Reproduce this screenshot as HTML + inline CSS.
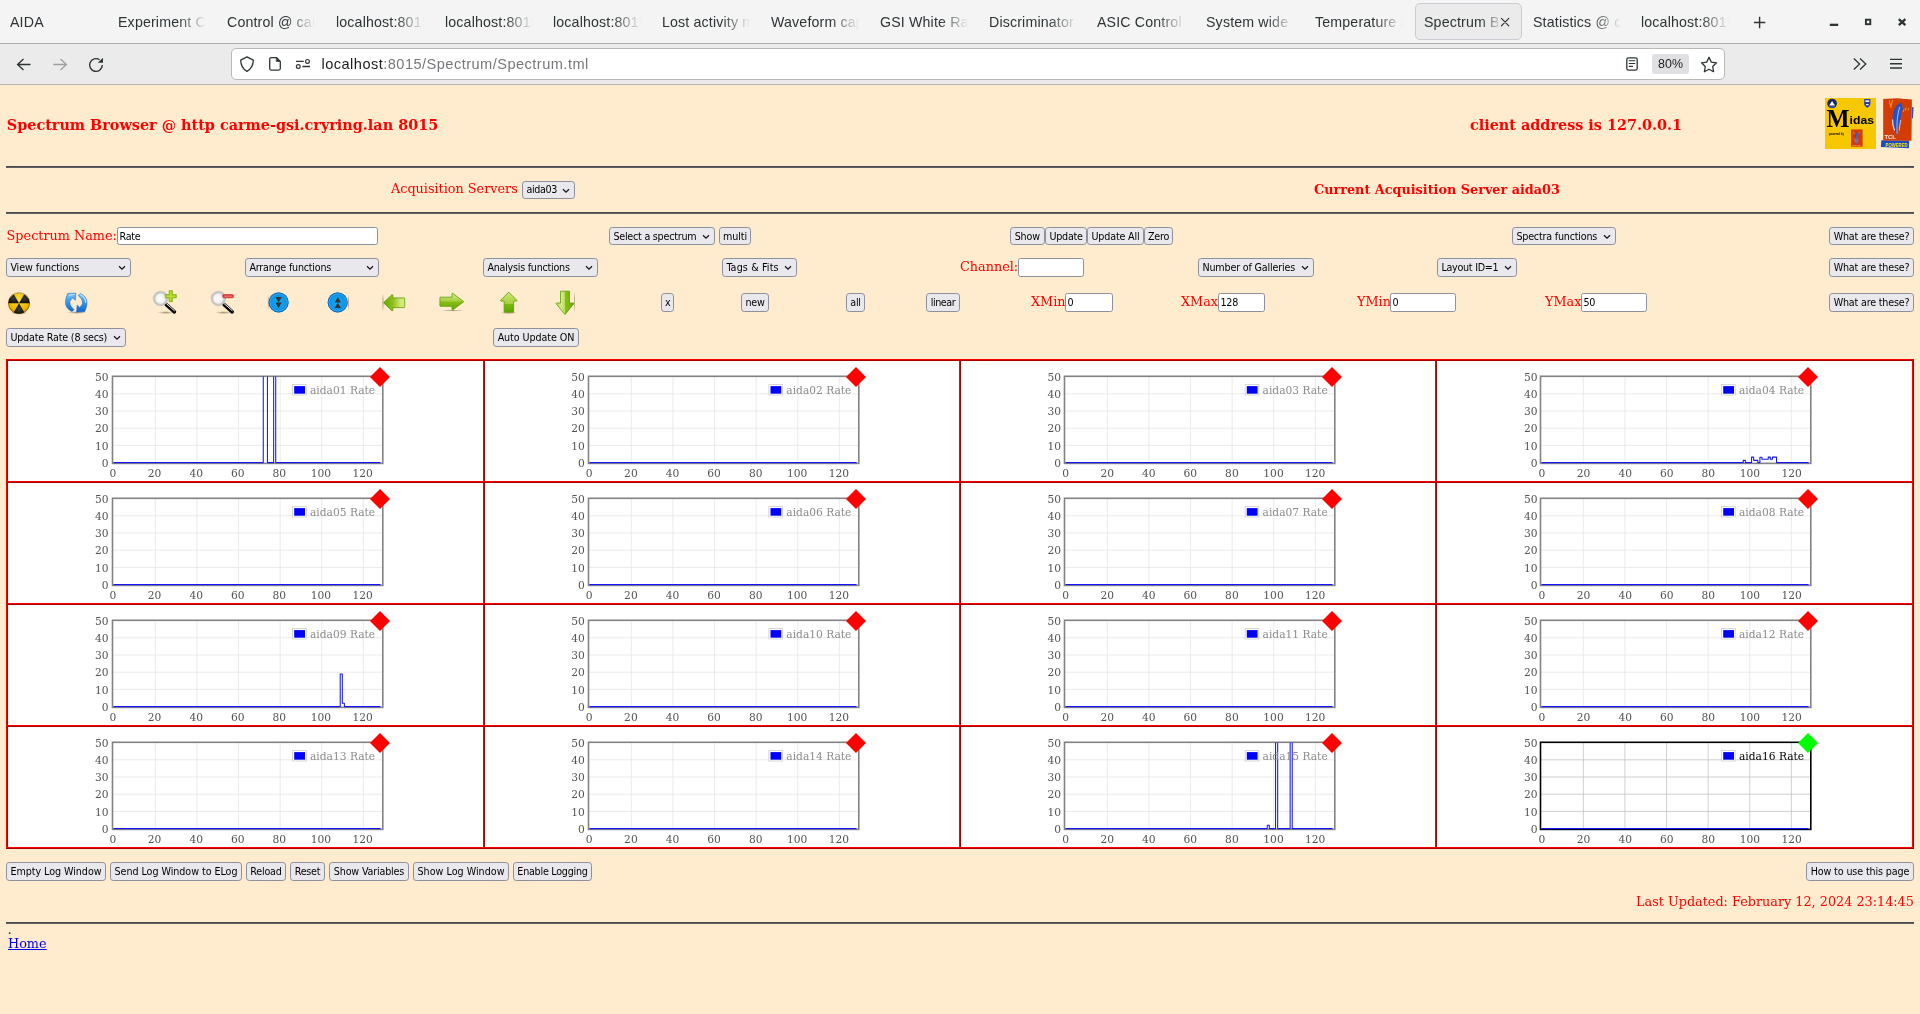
<!DOCTYPE html>
<html lang="en"><head><meta charset="utf-8"><title>Spectrum Browser</title>
<style>
html,body{margin:0;padding:0}
body{width:1920px;height:1014px;overflow:hidden;position:relative;background:#ffebcd;font-family:"DejaVu Serif","Liberation Serif",serif;font-size:12.8px;color:#f00}
.abs,.abs *{box-sizing:border-box}
.abs{position:absolute;white-space:nowrap}
/* chrome */
#tabbar{left:0;top:0;width:1920px;height:43px;background:#f4f4f4}
#tabline{left:0;top:43px;width:1920px;height:1px;background:#adadad}
#toolbar{left:0;top:44px;width:1920px;height:40px;background:#ebebeb}
#toolline{left:0;top:84px;width:1920px;height:1px;background:#b6b6b3}
.tab{top:12px;height:20px;width:89px;overflow:hidden;font:14.2px/20px "Liberation Sans","DejaVu Sans",sans-serif;color:#2e3436;letter-spacing:0.16px;
 -webkit-mask-image:linear-gradient(to right,#000 0,#000 60px,transparent 88px);mask-image:linear-gradient(to right,#000 0,#000 60px,transparent 88px)}
#acttab{left:1415px;top:3px;width:107px;height:37px;background:#ebebeb;border:1px solid #cbcbd3;border-radius:5px}
#urlbox{left:231px;top:48px;width:1494px;height:32px;background:#fff;border:1px solid #b9b9b6;border-radius:5px}
#url{left:321.5px;top:54px;font:14.6px/20px "Liberation Sans","DejaVu Sans",sans-serif;color:#77777b;letter-spacing:0.46px}
#url b{font-weight:normal;color:#1c1c1e}
#zoomb{left:1652px;top:54px;width:37px;height:20px;border-radius:3px;background:#e0e0e2;font:12.4px/20px "Liberation Sans","DejaVu Sans",sans-serif;color:#1c1c1e;text-align:center}
/* page */
.ui{font-family:"DejaVu Sans Condensed","DejaVu Sans","Liberation Sans",sans-serif;font-size:10.67px;color:#000}
.btn{height:19px;line-height:17px;background:#e9e9ed;border:1px solid #8f8f9d;border-radius:3.2px;padding:0 3px;text-align:center}
.sel{height:19px;line-height:17px;background:#e9e9ed;border:1px solid #8f8f9d;border-radius:3.2px;padding:0 0 0 3.4px}
.inp{height:18px;line-height:17.4px;background:#fff;border:1px solid #8f8f9d;border-radius:2.4px;padding:0 1.6px}
.hr{left:6px;width:1908px;height:2px;background:linear-gradient(#494b50,#494b50 50%,#5f6063 50%)}
.t{line-height:15px}
.tick{font-size:10.67px;line-height:13px;color:#545454}
</style></head><body>
<div id="root" style="position:absolute;left:0;top:0;width:1920px;height:1014px;will-change:transform">

<div class="abs" id="tabbar"></div><div class="abs" id="tabline"></div><div class="abs" id="toolbar"></div><div class="abs" id="toolline"></div>
<div class="abs" id="acttab"></div>
<div class="abs" id="urlbox"></div>
<div class="abs tab" style="left:10px">AIDA</div>
<div class="abs tab" style="left:118px">Experiment Control</div>
<div class="abs tab" style="left:227px">Control @ carme</div>
<div class="abs tab" style="left:336px">localhost:8015</div>
<div class="abs tab" style="left:445px">localhost:8015</div>
<div class="abs tab" style="left:553px">localhost:8015</div>
<div class="abs tab" style="left:662px">Lost activity monitor</div>
<div class="abs tab" style="left:771px">Waveform capture</div>
<div class="abs tab" style="left:880px">GSI White Rabbit</div>
<div class="abs tab" style="left:989px">Discriminator</div>
<div class="abs tab" style="left:1097px">ASIC Control</div>
<div class="abs tab" style="left:1206px">System wide checks</div>
<div class="abs tab" style="left:1315px">Temperature and status</div>
<div class="abs tab" style="left:1424px;width:74px;-webkit-mask-image:linear-gradient(to right,#000 0,#000 57px,transparent 79px);mask-image:linear-gradient(to right,#000 0,#000 57px,transparent 79px)">Spectrum Browser</div>
<div class="abs tab" style="left:1533px">Statistics @ carme</div>
<div class="abs tab" style="left:1641px">localhost:8015</div>
<svg class="abs" style="left:0;top:0" width="1920" height="85" viewBox="0 0 1920 85" fill="none" stroke="#2e3436" stroke-width="1.5" stroke-linecap="round" stroke-linejoin="round">
<path d="M1501.400 18.400l7.400 7.400M1508.800 18.400l-7.400 7.400" stroke-width="1.200"/>
<path d="M1753.900 22.500h11.400M1759.600 16.800v11.400" stroke-width="1.400" stroke-linecap="butt"/>
<path d="M1829.800 24.850h8.400" stroke-width="2.300" stroke-linecap="butt"/>
<rect x="1865.900" y="19.700" width="4.400" height="4.500" stroke-width="1.900" stroke-linejoin="miter"/>
<path d="M1898.800 19.200l6.600 6M1905.400 19.200l-6.600 6" stroke-width="2.300" stroke-linecap="butt"/>
<path d="M30.500 64.500H18M23.500 59.100L17.600 64.500l5.900 5.500" stroke-width="1.400" stroke-linecap="butt" stroke-linejoin="miter"/>
<path d="M53.200 64.500h13M60.500 59.100l5.900 5.400-5.900 5.500" stroke="#9d9fa0" stroke-width="1.300" stroke-linecap="butt" stroke-linejoin="miter"/>
<path d="M102.300 65A6.350 6.350 0 1 1 99.600 59.800" stroke-width="1.400" stroke-linecap="butt"/><path d="M103 57.800v4.900h-5.200z" fill="#2e3436" stroke="none"/>
<path d="M247 56.800l-6.300 3.300c0 5.500 1.500 8.600 6.300 11.300 4.800-2.700 6.300-5.800 6.300-11.300z" stroke-width="1.300"/>
<path d="M271.200 57.700h5.400l3.700 3.700v7.200a1.500 1.500 0 0 1-1.500 1.500h-7.600a1.500 1.500 0 0 1-1.500-1.500v-9.400a1.500 1.500 0 0 1 1.500-1.500z" stroke-width="1.300"/><path d="M276.600 57.700l3.700 3.700h-3.700z" fill="#2e3436" stroke-width="0.800"/>
<path d="M296 61.400h7.700M302.400 66.500h7.600" stroke-width="1.300" stroke-linecap="butt"/><circle cx="307.500" cy="61.400" r="1.900" stroke-width="1.200"/><circle cx="298.300" cy="66.500" r="1.900" stroke-width="1.200"/>
<rect x="1626.800" y="57.800" width="10.400" height="12.300" rx="1.700" stroke-width="1.300"/><path d="M1629.200 60.700h5.700M1629.200 63.500h5.700M1629.200 66.400h3.300" stroke-width="1.100"/>
<path d="M1709 57.300l2.300 4.800 5.200.7-3.800 3.700.9 5.200-4.600-2.500-4.600 2.500.9-5.200-3.800-3.700 5.200-.7z" stroke-width="1.300"/>
<path d="M1853.800 58.600l5.800 5.400-5.800 5.400M1860 58.600l5.800 5.400-5.800 5.400" stroke-width="1.300" stroke-linecap="butt" stroke-linejoin="miter"/>
<path d="M1890 59.400h12M1890 63.750h12M1890 68h12" stroke-width="1.300" stroke-linecap="butt"/>
</svg>
<div class="abs" id="url"><b>localhost</b>:8015/Spectrum/Spectrum.tml</div>
<div class="abs" id="zoomb">80%</div>
<div class="abs" style="left:6.8px;top:116.2px;font-weight:bold;font-size:14.4px;line-height:18px">Spectrum Browser @ http carme-gsi.cryring.lan 8015</div>
<div class="abs" style="left:1470px;top:116.2px;font-weight:bold;font-size:14.4px;line-height:18px">client address is 127.0.0.1</div>
<div class="abs hr" style="top:166px"></div>
<div class="abs t" style="left:391px;top:181px">Acquisition Servers</div>
<div class="abs t" style="left:1314px;top:182px;font-weight:bold">Current Acquisition Server aida03</div>
<div class="abs hr" style="top:212px"></div>
<div class="abs ui sel" style="line-height:15px;left:522px;top:181px;width:53px;height:18px"><span style="letter-spacing:-0.334px">aida03</span><svg style="position:absolute;right:4px;top:5.5px" width="8" height="6" viewBox="0 0 8 6"><path d="M1 1.200l3 3 3-3" fill="none" stroke="#15141a" stroke-width="1.250"/></svg></div>
<div class="abs t" style="left:6.6px;top:228px">Spectrum Name:</div>
<div class="abs ui inp" style="left:117px;top:227px;width:261px;height:18px"><span style="letter-spacing:-0.317px">Rate</span></div>
<div class="abs ui sel" style="line-height:17px;left:609px;top:227px;width:106px;height:18px"><span style="letter-spacing:-0.231px">Select a spectrum</span><svg style="position:absolute;right:4px;top:5.5px" width="8" height="6" viewBox="0 0 8 6"><path d="M1 1.200l3 3 3-3" fill="none" stroke="#15141a" stroke-width="1.250"/></svg></div>
<div class="abs ui btn" style="left:719px;top:227px;width:32px;height:18px"><span style="letter-spacing:-0.103px">multi</span></div>
<div class="abs ui btn" style="left:1010px;top:227px;width:34.6px;height:18px"><span style="letter-spacing:-0.144px">Show</span></div>
<div class="abs ui btn" style="left:1045.4px;top:227px;width:41.4px;height:18px"><span style="letter-spacing:-0.239px">Update</span></div>
<div class="abs ui btn" style="left:1087px;top:227px;width:57px;height:18px"><span style="letter-spacing:-0.166px">Update All</span></div>
<div class="abs ui btn" style="left:1144px;top:227px;width:29px;height:18px"><span style="letter-spacing:-0.262px">Zero</span></div>
<div class="abs ui sel" style="line-height:17px;left:1512px;top:227px;width:104px;height:18px"><span style="letter-spacing:-0.201px">Spectra functions</span><svg style="position:absolute;right:4px;top:5.5px" width="8" height="6" viewBox="0 0 8 6"><path d="M1 1.200l3 3 3-3" fill="none" stroke="#15141a" stroke-width="1.250"/></svg></div>
<div class="abs ui btn" style="left:1829px;top:227px;width:85px;height:18px"><span style="letter-spacing:-0.186px">What are these?</span></div>
<div class="abs ui sel" style="line-height:17px;left:6px;top:258px;width:125px;height:19px"><span style="letter-spacing:-0.088px">View functions</span><svg style="position:absolute;right:4px;top:6px" width="8" height="6" viewBox="0 0 8 6"><path d="M1 1.200l3 3 3-3" fill="none" stroke="#15141a" stroke-width="1.250"/></svg></div>
<div class="abs ui sel" style="line-height:17px;left:245px;top:258px;width:134px;height:19px"><span style="letter-spacing:-0.217px">Arrange functions</span><svg style="position:absolute;right:4px;top:6px" width="8" height="6" viewBox="0 0 8 6"><path d="M1 1.200l3 3 3-3" fill="none" stroke="#15141a" stroke-width="1.250"/></svg></div>
<div class="abs ui sel" style="line-height:17px;left:483px;top:258px;width:115px;height:19px"><span style="letter-spacing:-0.245px">Analysis functions</span><svg style="position:absolute;right:4px;top:6px" width="8" height="6" viewBox="0 0 8 6"><path d="M1 1.200l3 3 3-3" fill="none" stroke="#15141a" stroke-width="1.250"/></svg></div>
<div class="abs ui sel" style="line-height:17px;left:722px;top:258px;width:75px;height:19px"><span style="letter-spacing:0.139px">Tags &amp; Fits</span><svg style="position:absolute;right:4px;top:6px" width="8" height="6" viewBox="0 0 8 6"><path d="M1 1.200l3 3 3-3" fill="none" stroke="#15141a" stroke-width="1.250"/></svg></div>
<div class="abs t" style="left:960px;top:259px">Channel:</div>
<div class="abs ui inp" style="left:1018px;top:258px;width:66px;height:19px"></div>
<div class="abs ui sel" style="line-height:17px;left:1198px;top:258px;width:116px;height:19px"><span style="letter-spacing:-0.167px">Number of Galleries</span><svg style="position:absolute;right:4px;top:6px" width="8" height="6" viewBox="0 0 8 6"><path d="M1 1.200l3 3 3-3" fill="none" stroke="#15141a" stroke-width="1.250"/></svg></div>
<div class="abs ui sel" style="line-height:17px;left:1437px;top:258px;width:80px;height:19px"><span style="letter-spacing:-0.270px">Layout ID=1</span><svg style="position:absolute;right:4px;top:6px" width="8" height="6" viewBox="0 0 8 6"><path d="M1 1.200l3 3 3-3" fill="none" stroke="#15141a" stroke-width="1.250"/></svg></div>
<div class="abs ui btn" style="left:1829px;top:258px;width:85px;height:19px"><span style="letter-spacing:-0.186px">What are these?</span></div>
<div class="abs ui btn" style="left:661px;top:293px;width:13px;height:19px"><span style="letter-spacing:-0.372px">x</span></div>
<div class="abs ui btn" style="left:741px;top:293px;width:28px;height:19px"><span style="letter-spacing:-0.276px">new</span></div>
<div class="abs ui btn" style="left:846px;top:293px;width:19px;height:19px"><span style="letter-spacing:-0.301px">all</span></div>
<div class="abs ui btn" style="left:926px;top:293px;width:34px;height:19px"><span style="letter-spacing:-0.404px">linear</span></div>
<div class="abs t" style="left:1031px;top:294px">XMin</div>
<div class="abs ui inp" style="left:1065px;top:293px;width:48px;height:19px">0</div>
<div class="abs t" style="left:1181px;top:294px">XMax</div>
<div class="abs ui inp" style="left:1218px;top:293px;width:47px;height:19px"><span style="letter-spacing:-0.332px">128</span></div>
<div class="abs t" style="left:1357px;top:294px">YMin</div>
<div class="abs ui inp" style="left:1390px;top:293px;width:66px;height:19px">0</div>
<div class="abs t" style="left:1545px;top:294px">YMax</div>
<div class="abs ui inp" style="left:1581px;top:293px;width:66px;height:19px"><span style="letter-spacing:-0.452px">50</span></div>
<div class="abs ui btn" style="left:1829px;top:293px;width:85px;height:19px"><span style="letter-spacing:-0.186px">What are these?</span></div>
<div class="abs ui sel" style="line-height:17px;left:6px;top:328px;width:120px;height:19px"><span style="letter-spacing:-0.193px">Update Rate (8 secs)</span><svg style="position:absolute;right:4px;top:6px" width="8" height="6" viewBox="0 0 8 6"><path d="M1 1.200l3 3 3-3" fill="none" stroke="#15141a" stroke-width="1.250"/></svg></div>
<div class="abs ui btn" style="left:493px;top:328px;width:86px;height:19px"><span style="letter-spacing:-0.078px">Auto Update ON</span></div>
<svg class="abs" style="left:0;top:285px" width="600" height="35" viewBox="0 285 600 35">
<defs>
<radialGradient id="gy" cx="0.5" cy="0.35" r="0.75"><stop offset="0" stop-color="#ffe23a"/><stop offset="0.6" stop-color="#f2b800"/><stop offset="1" stop-color="#c98a00"/></radialGradient>
<radialGradient id="gk" cx="0.5" cy="0.5" r="0.6"><stop offset="0" stop-color="#3a3a3a"/><stop offset="1" stop-color="#0c0c0c"/></radialGradient>
<linearGradient id="gb1" x1="0" y1="0" x2="0" y2="1"><stop offset="0" stop-color="#9ad0f5"/><stop offset="0.45" stop-color="#3c9ae6"/><stop offset="1" stop-color="#0f66c8"/></linearGradient>
<linearGradient id="gb2" gradientUnits="userSpaceOnUse" x1="0" y1="292" x2="0" y2="313"><stop offset="0" stop-color="#8ecbf6"/><stop offset="0.45" stop-color="#3d9be8"/><stop offset="1" stop-color="#0b62c6"/></linearGradient>
<radialGradient id="gbl" cx="0.5" cy="0.5" r="0.5"><stop offset="0" stop-color="#16acf5"/><stop offset="0.7" stop-color="#0e96e6"/><stop offset="1" stop-color="#0a84da"/></radialGradient>
<radialGradient id="gl" cx="0.45" cy="0.5" r="0.55"><stop offset="0" stop-color="#ffffff"/><stop offset="0.7" stop-color="#efefef"/><stop offset="1" stop-color="#d8d8d8"/></radialGradient>
<linearGradient id="gga" x1="0" y1="0" x2="1" y2="0"><stop offset="0" stop-color="#62a608"/><stop offset="0.45" stop-color="#8fc01c"/><stop offset="0.8" stop-color="#d2e674"/><stop offset="1" stop-color="#dcec88"/></linearGradient>
<linearGradient id="ggb" x1="0" y1="0" x2="0" y2="1"><stop offset="0" stop-color="#d6ec92"/><stop offset="0.45" stop-color="#a8d040"/><stop offset="0.55" stop-color="#84bc12"/><stop offset="1" stop-color="#6aa80a"/></linearGradient>
<linearGradient id="ggc" x1="0" y1="0" x2="0" y2="1"><stop offset="0" stop-color="#cfe67a"/><stop offset="0.58" stop-color="#a6cf3c"/><stop offset="0.6" stop-color="#7ab80e"/><stop offset="1" stop-color="#5fa406"/></linearGradient>
<linearGradient id="ggd" x1="0" y1="0" x2="1" y2="0"><stop offset="0" stop-color="#b4d850"/><stop offset="0.3" stop-color="#d4ea90"/><stop offset="0.49" stop-color="#b8da58"/><stop offset="0.51" stop-color="#86be14"/><stop offset="1" stop-color="#6eac0a"/></linearGradient>
<radialGradient id="gsh" cx="0.5" cy="0.5" r="0.5"><stop offset="0" stop-color="#5a4a30" stop-opacity="0.55"/><stop offset="1" stop-color="#5a4a30" stop-opacity="0"/></radialGradient>
<clipPath id="cb"><circle cx="19" cy="303.200" r="10.600"/></clipPath>
<linearGradient id="gst" x1="0" y1="0" x2="0" y2="1"><stop offset="0" stop-color="#6a5a48" stop-opacity="0"/><stop offset="0.3" stop-color="#6a5a48" stop-opacity="0.45"/><stop offset="0.7" stop-color="#6a5a48" stop-opacity="0.45"/><stop offset="1" stop-color="#6a5a48" stop-opacity="0"/></linearGradient>
</defs>
<!-- radiation -->
<ellipse cx="19" cy="313" rx="9" ry="1.800" fill="url(#gsh)"/>
<circle cx="19" cy="303.200" r="10.800" fill="url(#gy)"/>
<g clip-path="url(#cb)" fill="url(#gk)">
<path d="M19 303.200L8 303.200A11 11 0 0 1 13.500 293.670z"/>
<path d="M19 303.200L24.500 293.670A11 11 0 0 1 30 303.200z"/>
<path d="M19 303.200L24.500 312.730A11 11 0 0 1 13.500 312.730z"/>
</g>
<circle cx="19" cy="303.200" r="10.500" fill="none" stroke="#1a1408" stroke-opacity="0.550" stroke-width="0.800"/>
<path d="M10.500 297.500A10 10 0 0 1 27.500 297.500" fill="none" stroke="#fff" stroke-opacity="0.350" stroke-width="1"/>
<!-- refresh -->
<ellipse cx="76.500" cy="312.500" rx="9.500" ry="1.500" fill="url(#gsh)"/>
<path id="rfa" d="M80.300 293.600C84.200 295.200 86.800 298.600 86.900 302.700C87 305.600 86 308.600 84.600 311.800L76.600 312.100L77.100 305.050L79.600 307.300C81.600 305.800 82.600 304.300 82.550 302.700C82.500 300 80.800 297.600 78.300 295.600z" fill="url(#gb2)" stroke="#1c6ed0" stroke-width="0.600" stroke-linejoin="round"/>
<path d="M72.10 311.60C68.20 310.00 65.60 306.60 65.50 302.50C65.40 299.60 66.40 296.60 67.80 293.40L75.80 293.10L75.30 300.15L72.80 297.90C70.80 299.40 69.80 300.90 69.85 302.50C69.90 305.20 71.60 307.60 74.10 309.60z" fill="url(#gb2)" stroke="#1c6ed0" stroke-width="0.600" stroke-linejoin="round"/>
<path d="M80.600 294.800C83.600 296.400 85.500 299.200 85.700 302.400" fill="none" stroke="#e4f3fd" stroke-opacity="0.800" stroke-width="1.200" stroke-linecap="round"/>
<path d="M69.300 295.400L74.300 294.300" fill="none" stroke="#d6ecfc" stroke-opacity="0.700" stroke-width="1.100" stroke-linecap="round"/>
<!-- zoom in -->
<g id="mag">
<ellipse cx="165.800" cy="312.600" rx="8.500" ry="1.500" fill="url(#gsh)"/>
<path d="M166.300 304.600L174.400 311.800" stroke="#0a0a0a" stroke-width="3.600" stroke-linecap="round"/>
<path d="M166.600 303.800L174.400 310.700" stroke="#f4f4f4" stroke-width="1" stroke-linecap="round"/>
<circle cx="160.600" cy="298.500" r="6.300" fill="url(#gl)" stroke="#c6c6c6" stroke-width="2.100"/>
<circle cx="160.600" cy="298.500" r="7.400" fill="none" stroke="#a8a8a8" stroke-opacity="0.600" stroke-width="0.500"/>
</g>
<path d="M169.150 290.700h3.300v3.850h3.850v3.300h-3.850v3.850h-3.300v-3.850h-3.850v-3.300h3.850z" fill="#9ccb1c" stroke="#74ac0a" stroke-width="0.700" stroke-linejoin="round"/>
<path d="M170.800 291.600v9.200M166.200 296.200h9.200" stroke="#d8e640" stroke-width="1" stroke-opacity="0.900"/>
<!-- zoom out -->
<use href="#mag" x="57.800"/>
<rect x="222.600" y="294.600" width="10.900" height="3.200" rx="1.200" fill="#e23a3a" stroke="#c81e1e" stroke-width="0.600"/>
<path d="M223.600 296.200h9" stroke="#f08a8a" stroke-width="0.900"/>
<rect x="267.900" y="294.500" width="0.900" height="15.500" fill="url(#gst)"/>
<rect x="348" y="294.500" width="0.900" height="15.500" fill="url(#gst)"/>
<rect x="382.400" y="293.500" width="1.100" height="18" fill="url(#gst)"/>
<rect x="574" y="291.500" width="0.900" height="21" fill="url(#gst)"/>
<!-- blue down -->
<circle cx="278.600" cy="302.400" r="10" fill="url(#gbl)"/>
<circle cx="278.600" cy="302.400" r="9.550" fill="none" stroke="#0a64ba" stroke-width="0.900"/><circle cx="278.600" cy="302.400" r="8.600" fill="none" stroke="#8ad6ff" stroke-opacity="0.550" stroke-width="0.700"/>
<path d="M275.500 297h6.200l-3.100 5.400zM275.500 302.500h6.200l-3.100 5.500z" fill="#35332f"/>
<!-- blue up -->
<circle cx="337.700" cy="302.400" r="10" fill="url(#gbl)"/>
<circle cx="337.700" cy="302.400" r="9.550" fill="none" stroke="#0a64ba" stroke-width="0.900"/><circle cx="337.700" cy="302.400" r="8.600" fill="none" stroke="#8ad6ff" stroke-opacity="0.550" stroke-width="0.700"/>
<path d="M334.700 302.400h6.200l-3.100 -5.400zM334.700 307.900h6.200l-3.100 -5.500z" fill="#35332f"/>
<!-- green left -->
<path d="M383.500 302.700L391.900 294.700L392.900 295V297.900H404.200Q404.700 297.900 404.700 298.400V307.100Q404.700 307.600 404.200 307.600H392.900V310.500L391.900 310.800z" fill="url(#gga)" stroke="#5c9e08" stroke-width="0.800" stroke-linejoin="round"/>
<!-- green right -->
<ellipse cx="452.500" cy="310.600" rx="11.500" ry="1" fill="url(#gsh)"/>
<path d="M440.300 297.200H452V293.600L452.800 293.300L463.700 301.700L452.800 309.900L452 309.600V306.300H440.300Q439.900 306.300 439.900 305.900V297.600Q439.900 297.200 440.300 297.200z" fill="url(#ggb)" stroke="#5c9e08" stroke-width="0.800" stroke-linejoin="round"/>
<!-- green up -->
<ellipse cx="508.750" cy="312.700" rx="8.500" ry="1.400" fill="url(#gsh)"/>
<path d="M508.750 292.100L517 300.400L516.700 301.100H513.600V312.200H504.100V301.100H500.800L500.500 300.400z" fill="url(#ggc)" stroke="#5c9e08" stroke-width="0.800" stroke-linejoin="round"/>
<!-- green down -->
<path d="M560.500 291.200H569.500V303H573.600L573.900 303.700L565 314.600L556.100 303.700L556.400 303H560.500z" fill="url(#ggd)" stroke="#5c9e08" stroke-width="0.800" stroke-linejoin="round"/>
</svg>
<svg class="abs" style="left:1820px;top:95px" width="100" height="58" viewBox="1820 95 100 58">
<defs>
<g id="feather">
<path d="M1901.200 102.600C1896.200 104.800 1892.900 110.500 1892.600 117.500C1892.300 124 1893.800 130.500 1897 135.600C1897.600 130.500 1898.600 126.500 1899.800 122C1900.800 118.200 1901.400 115 1901.300 111.600L1902.800 110.200C1902.800 107.400 1902.200 104.600 1901.200 102.600z" fill="#2353c4"/>
<path d="M1899.800 107C1897.600 113 1896.600 122 1897.100 134" fill="none" stroke="#e8eefc" stroke-width="0.700"/>
<path d="M1892.600 119.500C1892.400 123 1893 127 1894.600 130.500" fill="none" stroke="#f0e8e0" stroke-width="1.100"/>
<path d="M1900.800 120C1900 123.500 1899.400 127 1899.300 130.500" fill="none" stroke="#f0e0d8" stroke-width="0.800"/>
</g>
</defs>
<!-- Midas -->
<rect x="1825" y="98" width="51" height="51" fill="#f7c800"/>
<circle cx="1832.100" cy="103.500" r="4.800" fill="#16246e"/>
<path d="M1829.200 105.600L1832.100 100.900L1835 105.600z" fill="#fff"/>
<path d="M1828.400 106.300A4.800 4.800 0 0 0 1835.800 106.300z" fill="#3c5cc0"/>
<path d="M1864.200 99h6.200v4.600c0 2.200-1.400 3.400-3.100 4.100c-1.700-.7-3.100-1.900-3.100-4.100z" fill="#2a3caa"/>
<path d="M1865.400 100.300h3.800v1.600h-3.800zM1866 104h2.600v1.300h-2.600z" fill="#e8ecff"/>
<text x="1826.600" y="126.800" font-family="'Liberation Serif','DejaVu Serif',serif" font-weight="bold" font-size="26" fill="#000" textLength="23" lengthAdjust="spacingAndGlyphs">M</text>
<text x="1849.600" y="123.700" font-family="'Liberation Sans','DejaVu Sans',sans-serif" font-weight="bold" font-size="11.400" fill="#000" textLength="24.600" lengthAdjust="spacingAndGlyphs">idas</text>
<text x="1828.900" y="135.200" font-family="'Liberation Sans','DejaVu Sans',sans-serif" font-weight="bold" font-size="3.600" fill="#000" textLength="15" lengthAdjust="spacingAndGlyphs">powered by</text>
<rect x="1851" y="129.400" width="11.600" height="17.300" fill="#d63a08"/>
<use href="#feather" transform="translate(1856.800 138) scale(0.37) translate(-1897.500 -119)"/>
<path d="M1853.400 131.500l1 2.600M1859.600 131.800l-.8 2" stroke="#f7c800" stroke-width="0.500"/>
<text x="1852.200" y="145.600" font-family="'Liberation Sans','DejaVu Sans',sans-serif" font-weight="bold" font-size="2.200" fill="#f0b0a0" textLength="9" lengthAdjust="spacingAndGlyphs">TCL/TK</text>
<!-- Tcl powered -->
<path d="M1912 107.300L1913.600 107L1913 118L1911.800 119z" fill="#2353c4"/>
<path d="M1881.300 140.200L1909.200 140.400L1908.900 148.200L1880.900 146.900z" fill="#1c4cc0"/>
<path d="M1883.200 99L1897 98.300L1911.900 99.600L1911.500 140.800L1883.200 140.600z" fill="#d33c02"/>
<use href="#feather"/>
<path d="M1889.300 100.500C1889.600 103 1890.300 105.500 1891.300 108M1892.600 100C1891.800 102 1891.500 103.500 1891.600 105.500" fill="none" stroke="#f6c020" stroke-width="0.800"/>
<path d="M1906.200 107.600l-1.200 3M1908.800 108l-1 2.400M1904 109.400l-1 2.600" fill="none" stroke="#f6c020" stroke-width="0.700"/>
<text x="1884.400" y="138.800" font-family="'Liberation Sans','DejaVu Sans',sans-serif" font-weight="bold" font-size="6" fill="#f4ece4" textLength="11.600" lengthAdjust="spacingAndGlyphs">TCL</text>
<text x="1885.600" y="146.800" font-family="'Liberation Sans','DejaVu Sans',sans-serif" font-weight="bold" font-size="5.200" fill="#f2e420" textLength="22" lengthAdjust="spacingAndGlyphs">POWERED</text>
</svg>
<div class="abs" style="left:6px;top:359px;width:1908px;height:490px;background:#fff"></div>
<div class="abs" style="left:6px;top:359px;width:2px;height:490px;background:linear-gradient(to right,#ff0000 50%,#aa0000 50%)"></div>
<div class="abs" style="left:483px;top:359px;width:2px;height:490px;background:linear-gradient(to right,#ff0000 50%,#aa0000 50%)"></div>
<div class="abs" style="left:959px;top:359px;width:2px;height:490px;background:linear-gradient(to right,#ff0000 50%,#aa0000 50%)"></div>
<div class="abs" style="left:1435px;top:359px;width:2px;height:490px;background:linear-gradient(to right,#ff0000 50%,#aa0000 50%)"></div>
<div class="abs" style="left:1912px;top:359px;width:2px;height:490px;background:linear-gradient(to right,#ff0000 50%,#aa0000 50%)"></div>
<div class="abs" style="left:6px;top:359px;width:1908px;height:2px;background:linear-gradient(#ff0000 50%,#aa0000 50%)"></div>
<div class="abs" style="left:6px;top:481px;width:1908px;height:2px;background:linear-gradient(#ff0000 50%,#aa0000 50%)"></div>
<div class="abs" style="left:6px;top:603px;width:1908px;height:2px;background:linear-gradient(#ff0000 50%,#aa0000 50%)"></div>
<div class="abs" style="left:6px;top:725px;width:1908px;height:2px;background:linear-gradient(#ff0000 50%,#aa0000 50%)"></div>
<div class="abs" style="left:6px;top:847px;width:1908px;height:2px;background:linear-gradient(#ff0000 50%,#aa0000 50%)"></div>
<svg class="abs" style="left:92px;top:365px;overflow:visible" width="300" height="110" viewBox="0 0 300 110"><path d="M63.35 11.60V97.60" stroke="#e6e6e6" stroke-width="0.8"/><path d="M104.95 11.60V97.60" stroke="#e6e6e6" stroke-width="0.8"/><path d="M146.55 11.60V97.60" stroke="#e6e6e6" stroke-width="0.8"/><path d="M188.15 11.60V97.60" stroke="#e6e6e6" stroke-width="0.8"/><path d="M229.75 11.60V97.60" stroke="#e6e6e6" stroke-width="0.8"/><path d="M271.35 11.60V97.60" stroke="#e6e6e6" stroke-width="0.8"/><path d="M21.00 80.40H290.60" stroke="#e6e6e6" stroke-width="0.8"/><path d="M21.00 63.20H290.60" stroke="#e6e6e6" stroke-width="0.8"/><path d="M21.00 46.00H290.60" stroke="#e6e6e6" stroke-width="0.8"/><path d="M21.00 28.80H290.60" stroke="#e6e6e6" stroke-width="0.8"/><rect x="20.50" y="11.30" width="270.30" height="87.10" fill="none" stroke="#828282" stroke-width="1.6"/><svg x="20.00" y="11.60" width="271.60" height="86.90" viewBox="20.00 11.60 271.60 86.90"><path d="M21.50 97.60H23.58H25.66H27.74H29.82H31.90H33.98H36.06H38.14H40.22H42.30H44.38H46.46H48.54H50.62H52.70H54.78H56.86H58.94H61.02H63.10H65.18H67.26H69.34H71.42H73.50H75.58H77.66H79.74H81.82H83.90H85.98H88.06H90.14H92.22H94.30H96.38H98.46H100.54H102.62H104.70H106.78H108.86H110.94H113.02H115.10H117.18H119.26H121.34H123.42H125.50H127.58H129.66H131.74H133.82H135.90H137.98H140.06H142.14H144.22H146.30H148.38H150.46H152.54H154.62H156.70H158.78H160.86H162.94H165.02H167.10H169.18H171.26V6.00H173.34H175.42V97.60H177.50H179.58H181.66V6.00H183.74V97.60H185.82H187.90H189.98H192.06H194.14H196.22H198.30H200.38H202.46H204.54H206.62H208.70H210.78H212.86H214.94H217.02H219.10H221.18H223.26H225.34H227.42H229.50H231.58H233.66H235.74H237.82H239.90H241.98H244.06H246.14H248.22H250.30H252.38H254.46H256.54H258.62H260.70H262.78H264.86H266.94H269.02H271.10H273.18H275.26H277.34H279.42H281.50H283.58H285.66H287.74H288.59" fill="none" stroke="#1414ff" stroke-width="1.05" stroke-linejoin="round"/></svg><rect x="200.6" y="19.6" width="13.6" height="10.4" fill="#fff" stroke="#ccc" stroke-width="0.8"/><rect x="202.2" y="21.1" width="10.8" height="7.6" fill="#0000ff"/><text x="218.0" y="29.0" font-size="10.67" fill="#8c8c8c">aida01 Rate</text><text x="16.5" y="101.8" font-size="10.67" fill="#545454" text-anchor="end">0</text><text x="16.5" y="84.6" font-size="10.67" fill="#545454" text-anchor="end">10</text><text x="16.5" y="67.4" font-size="10.67" fill="#545454" text-anchor="end">20</text><text x="16.5" y="50.2" font-size="10.67" fill="#545454" text-anchor="end">30</text><text x="16.5" y="33.0" font-size="10.67" fill="#545454" text-anchor="end">40</text><text x="16.5" y="15.8" font-size="10.67" fill="#545454" text-anchor="end">50</text><text x="20.9" y="111.7" font-size="10.67" fill="#545454" text-anchor="middle">0</text><text x="62.6" y="111.7" font-size="10.67" fill="#545454" text-anchor="middle">20</text><text x="104.2" y="111.7" font-size="10.67" fill="#545454" text-anchor="middle">40</text><text x="145.8" y="111.7" font-size="10.67" fill="#545454" text-anchor="middle">60</text><text x="187.3" y="111.7" font-size="10.67" fill="#545454" text-anchor="middle">80</text><text x="228.9" y="111.7" font-size="10.67" fill="#545454" text-anchor="middle">100</text><text x="270.6" y="111.7" font-size="10.67" fill="#545454" text-anchor="middle">120</text><path d="M288.0 2.0l10 10l-10 10l-10 -10z" fill="#ff0000"/></svg>
<svg class="abs" style="left:568px;top:365px;overflow:visible" width="300" height="110" viewBox="0 0 300 110"><path d="M63.35 11.60V97.60" stroke="#e6e6e6" stroke-width="0.8"/><path d="M104.95 11.60V97.60" stroke="#e6e6e6" stroke-width="0.8"/><path d="M146.55 11.60V97.60" stroke="#e6e6e6" stroke-width="0.8"/><path d="M188.15 11.60V97.60" stroke="#e6e6e6" stroke-width="0.8"/><path d="M229.75 11.60V97.60" stroke="#e6e6e6" stroke-width="0.8"/><path d="M271.35 11.60V97.60" stroke="#e6e6e6" stroke-width="0.8"/><path d="M21.00 80.40H290.60" stroke="#e6e6e6" stroke-width="0.8"/><path d="M21.00 63.20H290.60" stroke="#e6e6e6" stroke-width="0.8"/><path d="M21.00 46.00H290.60" stroke="#e6e6e6" stroke-width="0.8"/><path d="M21.00 28.80H290.60" stroke="#e6e6e6" stroke-width="0.8"/><rect x="20.50" y="11.30" width="270.30" height="87.10" fill="none" stroke="#828282" stroke-width="1.6"/><svg x="20.00" y="11.60" width="271.60" height="86.90" viewBox="20.00 11.60 271.60 86.90"><path d="M21.50 97.60H23.58H25.66H27.74H29.82H31.90H33.98H36.06H38.14H40.22H42.30H44.38H46.46H48.54H50.62H52.70H54.78H56.86H58.94H61.02H63.10H65.18H67.26H69.34H71.42H73.50H75.58H77.66H79.74H81.82H83.90H85.98H88.06H90.14H92.22H94.30H96.38H98.46H100.54H102.62H104.70H106.78H108.86H110.94H113.02H115.10H117.18H119.26H121.34H123.42H125.50H127.58H129.66H131.74H133.82H135.90H137.98H140.06H142.14H144.22H146.30H148.38H150.46H152.54H154.62H156.70H158.78H160.86H162.94H165.02H167.10H169.18H171.26H173.34H175.42H177.50H179.58H181.66H183.74H185.82H187.90H189.98H192.06H194.14H196.22H198.30H200.38H202.46H204.54H206.62H208.70H210.78H212.86H214.94H217.02H219.10H221.18H223.26H225.34H227.42H229.50H231.58H233.66H235.74H237.82H239.90H241.98H244.06H246.14H248.22H250.30H252.38H254.46H256.54H258.62H260.70H262.78H264.86H266.94H269.02H271.10H273.18H275.26H277.34H279.42H281.50H283.58H285.66H287.74H288.59" fill="none" stroke="#1414ff" stroke-width="1.05" stroke-linejoin="round"/></svg><rect x="200.9" y="19.6" width="13.6" height="10.4" fill="#fff" stroke="#ccc" stroke-width="0.8"/><rect x="202.5" y="21.1" width="10.8" height="7.6" fill="#0000ff"/><text x="218.3" y="29.0" font-size="10.67" fill="#8c8c8c">aida02 Rate</text><text x="16.8" y="101.8" font-size="10.67" fill="#545454" text-anchor="end">0</text><text x="16.8" y="84.6" font-size="10.67" fill="#545454" text-anchor="end">10</text><text x="16.8" y="67.4" font-size="10.67" fill="#545454" text-anchor="end">20</text><text x="16.8" y="50.2" font-size="10.67" fill="#545454" text-anchor="end">30</text><text x="16.8" y="33.0" font-size="10.67" fill="#545454" text-anchor="end">40</text><text x="16.8" y="15.8" font-size="10.67" fill="#545454" text-anchor="end">50</text><text x="21.2" y="111.7" font-size="10.67" fill="#545454" text-anchor="middle">0</text><text x="62.9" y="111.7" font-size="10.67" fill="#545454" text-anchor="middle">20</text><text x="104.5" y="111.7" font-size="10.67" fill="#545454" text-anchor="middle">40</text><text x="146.1" y="111.7" font-size="10.67" fill="#545454" text-anchor="middle">60</text><text x="187.7" y="111.7" font-size="10.67" fill="#545454" text-anchor="middle">80</text><text x="229.2" y="111.7" font-size="10.67" fill="#545454" text-anchor="middle">100</text><text x="270.9" y="111.7" font-size="10.67" fill="#545454" text-anchor="middle">120</text><path d="M288.0 2.0l10 10l-10 10l-10 -10z" fill="#ff0000"/></svg>
<svg class="abs" style="left:1044px;top:365px;overflow:visible" width="300" height="110" viewBox="0 0 300 110"><path d="M63.35 11.60V97.60" stroke="#e6e6e6" stroke-width="0.8"/><path d="M104.95 11.60V97.60" stroke="#e6e6e6" stroke-width="0.8"/><path d="M146.55 11.60V97.60" stroke="#e6e6e6" stroke-width="0.8"/><path d="M188.15 11.60V97.60" stroke="#e6e6e6" stroke-width="0.8"/><path d="M229.75 11.60V97.60" stroke="#e6e6e6" stroke-width="0.8"/><path d="M271.35 11.60V97.60" stroke="#e6e6e6" stroke-width="0.8"/><path d="M21.00 80.40H290.60" stroke="#e6e6e6" stroke-width="0.8"/><path d="M21.00 63.20H290.60" stroke="#e6e6e6" stroke-width="0.8"/><path d="M21.00 46.00H290.60" stroke="#e6e6e6" stroke-width="0.8"/><path d="M21.00 28.80H290.60" stroke="#e6e6e6" stroke-width="0.8"/><rect x="20.50" y="11.30" width="270.30" height="87.10" fill="none" stroke="#828282" stroke-width="1.6"/><svg x="20.00" y="11.60" width="271.60" height="86.90" viewBox="20.00 11.60 271.60 86.90"><path d="M21.50 97.60H23.58H25.66H27.74H29.82H31.90H33.98H36.06H38.14H40.22H42.30H44.38H46.46H48.54H50.62H52.70H54.78H56.86H58.94H61.02H63.10H65.18H67.26H69.34H71.42H73.50H75.58H77.66H79.74H81.82H83.90H85.98H88.06H90.14H92.22H94.30H96.38H98.46H100.54H102.62H104.70H106.78H108.86H110.94H113.02H115.10H117.18H119.26H121.34H123.42H125.50H127.58H129.66H131.74H133.82H135.90H137.98H140.06H142.14H144.22H146.30H148.38H150.46H152.54H154.62H156.70H158.78H160.86H162.94H165.02H167.10H169.18H171.26H173.34H175.42H177.50H179.58H181.66H183.74H185.82H187.90H189.98H192.06H194.14H196.22H198.30H200.38H202.46H204.54H206.62H208.70H210.78H212.86H214.94H217.02H219.10H221.18H223.26H225.34H227.42H229.50H231.58H233.66H235.74H237.82H239.90H241.98H244.06H246.14H248.22H250.30H252.38H254.46H256.54H258.62H260.70H262.78H264.86H266.94H269.02H271.10H273.18H275.26H277.34H279.42H281.50H283.58H285.66H287.74H288.59" fill="none" stroke="#1414ff" stroke-width="1.05" stroke-linejoin="round"/></svg><rect x="201.2" y="19.6" width="13.6" height="10.4" fill="#fff" stroke="#ccc" stroke-width="0.8"/><rect x="202.8" y="21.1" width="10.8" height="7.6" fill="#0000ff"/><text x="218.6" y="29.0" font-size="10.67" fill="#8c8c8c">aida03 Rate</text><text x="17.1" y="101.8" font-size="10.67" fill="#545454" text-anchor="end">0</text><text x="17.1" y="84.6" font-size="10.67" fill="#545454" text-anchor="end">10</text><text x="17.1" y="67.4" font-size="10.67" fill="#545454" text-anchor="end">20</text><text x="17.1" y="50.2" font-size="10.67" fill="#545454" text-anchor="end">30</text><text x="17.1" y="33.0" font-size="10.67" fill="#545454" text-anchor="end">40</text><text x="17.1" y="15.8" font-size="10.67" fill="#545454" text-anchor="end">50</text><text x="21.6" y="111.7" font-size="10.67" fill="#545454" text-anchor="middle">0</text><text x="63.2" y="111.7" font-size="10.67" fill="#545454" text-anchor="middle">20</text><text x="104.8" y="111.7" font-size="10.67" fill="#545454" text-anchor="middle">40</text><text x="146.3" y="111.7" font-size="10.67" fill="#545454" text-anchor="middle">60</text><text x="187.9" y="111.7" font-size="10.67" fill="#545454" text-anchor="middle">80</text><text x="229.5" y="111.7" font-size="10.67" fill="#545454" text-anchor="middle">100</text><text x="271.2" y="111.7" font-size="10.67" fill="#545454" text-anchor="middle">120</text><path d="M288.0 2.0l10 10l-10 10l-10 -10z" fill="#ff0000"/></svg>
<svg class="abs" style="left:1520px;top:365px;overflow:visible" width="300" height="110" viewBox="0 0 300 110"><path d="M63.35 11.60V97.60" stroke="#e6e6e6" stroke-width="0.8"/><path d="M104.95 11.60V97.60" stroke="#e6e6e6" stroke-width="0.8"/><path d="M146.55 11.60V97.60" stroke="#e6e6e6" stroke-width="0.8"/><path d="M188.15 11.60V97.60" stroke="#e6e6e6" stroke-width="0.8"/><path d="M229.75 11.60V97.60" stroke="#e6e6e6" stroke-width="0.8"/><path d="M271.35 11.60V97.60" stroke="#e6e6e6" stroke-width="0.8"/><path d="M21.00 80.40H290.60" stroke="#e6e6e6" stroke-width="0.8"/><path d="M21.00 63.20H290.60" stroke="#e6e6e6" stroke-width="0.8"/><path d="M21.00 46.00H290.60" stroke="#e6e6e6" stroke-width="0.8"/><path d="M21.00 28.80H290.60" stroke="#e6e6e6" stroke-width="0.8"/><rect x="20.50" y="11.30" width="270.30" height="87.10" fill="none" stroke="#828282" stroke-width="1.6"/><svg x="20.00" y="11.60" width="271.60" height="86.90" viewBox="20.00 11.60 271.60 86.90"><path d="M21.50 97.60H23.58H25.66H27.74H29.82H31.90H33.98H36.06H38.14H40.22H42.30H44.38H46.46H48.54H50.62H52.70H54.78H56.86H58.94H61.02H63.10H65.18H67.26H69.34H71.42H73.50H75.58H77.66H79.74H81.82H83.90H85.98H88.06H90.14H92.22H94.30H96.38H98.46H100.54H102.62H104.70H106.78H108.86H110.94H113.02H115.10H117.18H119.26H121.34H123.42H125.50H127.58H129.66H131.74H133.82H135.90H137.98H140.06H142.14H144.22H146.30H148.38H150.46H152.54H154.62H156.70H158.78H160.86H162.94H165.02H167.10H169.18H171.26H173.34H175.42H177.50H179.58H181.66H183.74H185.82H187.90H189.98H192.06H194.14H196.22H198.30H200.38H202.46H204.54H206.62H208.70H210.78H212.86H214.94H217.02H219.10H221.18H223.26V95.36H225.34V97.60H227.42H229.50H231.58V92.10H233.66V95.36H235.74H237.82V97.60H239.90V92.27H241.98V94.33H244.06H246.14H248.22V92.10H250.30V94.33H252.38V92.10H254.46H256.54V97.60H258.62H260.70H262.78H264.86H266.94H269.02H271.10H273.18H275.26H277.34H279.42H281.50H283.58H285.66H287.74H288.59" fill="none" stroke="#1414ff" stroke-width="1.05" stroke-linejoin="round"/></svg><rect x="201.6" y="19.6" width="13.6" height="10.4" fill="#fff" stroke="#ccc" stroke-width="0.8"/><rect x="203.2" y="21.1" width="10.8" height="7.6" fill="#0000ff"/><text x="219.0" y="29.0" font-size="10.67" fill="#8c8c8c">aida04 Rate</text><text x="17.5" y="101.8" font-size="10.67" fill="#545454" text-anchor="end">0</text><text x="17.5" y="84.6" font-size="10.67" fill="#545454" text-anchor="end">10</text><text x="17.5" y="67.4" font-size="10.67" fill="#545454" text-anchor="end">20</text><text x="17.5" y="50.2" font-size="10.67" fill="#545454" text-anchor="end">30</text><text x="17.5" y="33.0" font-size="10.67" fill="#545454" text-anchor="end">40</text><text x="17.5" y="15.8" font-size="10.67" fill="#545454" text-anchor="end">50</text><text x="21.9" y="111.7" font-size="10.67" fill="#545454" text-anchor="middle">0</text><text x="63.6" y="111.7" font-size="10.67" fill="#545454" text-anchor="middle">20</text><text x="105.2" y="111.7" font-size="10.67" fill="#545454" text-anchor="middle">40</text><text x="146.8" y="111.7" font-size="10.67" fill="#545454" text-anchor="middle">60</text><text x="188.3" y="111.7" font-size="10.67" fill="#545454" text-anchor="middle">80</text><text x="229.9" y="111.7" font-size="10.67" fill="#545454" text-anchor="middle">100</text><text x="271.6" y="111.7" font-size="10.67" fill="#545454" text-anchor="middle">120</text><path d="M288.0 2.0l10 10l-10 10l-10 -10z" fill="#ff0000"/></svg>
<svg class="abs" style="left:92px;top:487px;overflow:visible" width="300" height="110" viewBox="0 0 300 110"><path d="M63.35 11.60V97.60" stroke="#e6e6e6" stroke-width="0.8"/><path d="M104.95 11.60V97.60" stroke="#e6e6e6" stroke-width="0.8"/><path d="M146.55 11.60V97.60" stroke="#e6e6e6" stroke-width="0.8"/><path d="M188.15 11.60V97.60" stroke="#e6e6e6" stroke-width="0.8"/><path d="M229.75 11.60V97.60" stroke="#e6e6e6" stroke-width="0.8"/><path d="M271.35 11.60V97.60" stroke="#e6e6e6" stroke-width="0.8"/><path d="M21.00 80.40H290.60" stroke="#e6e6e6" stroke-width="0.8"/><path d="M21.00 63.20H290.60" stroke="#e6e6e6" stroke-width="0.8"/><path d="M21.00 46.00H290.60" stroke="#e6e6e6" stroke-width="0.8"/><path d="M21.00 28.80H290.60" stroke="#e6e6e6" stroke-width="0.8"/><rect x="20.50" y="11.30" width="270.30" height="87.10" fill="none" stroke="#828282" stroke-width="1.6"/><svg x="20.00" y="11.60" width="271.60" height="86.90" viewBox="20.00 11.60 271.60 86.90"><path d="M21.50 97.60H23.58H25.66H27.74H29.82H31.90H33.98H36.06H38.14H40.22H42.30H44.38H46.46H48.54H50.62H52.70H54.78H56.86H58.94H61.02H63.10H65.18H67.26H69.34H71.42H73.50H75.58H77.66H79.74H81.82H83.90H85.98H88.06H90.14H92.22H94.30H96.38H98.46H100.54H102.62H104.70H106.78H108.86H110.94H113.02H115.10H117.18H119.26H121.34H123.42H125.50H127.58H129.66H131.74H133.82H135.90H137.98H140.06H142.14H144.22H146.30H148.38H150.46H152.54H154.62H156.70H158.78H160.86H162.94H165.02H167.10H169.18H171.26H173.34H175.42H177.50H179.58H181.66H183.74H185.82H187.90H189.98H192.06H194.14H196.22H198.30H200.38H202.46H204.54H206.62H208.70H210.78H212.86H214.94H217.02H219.10H221.18H223.26H225.34H227.42H229.50H231.58H233.66H235.74H237.82H239.90H241.98H244.06H246.14H248.22H250.30H252.38H254.46H256.54H258.62H260.70H262.78H264.86H266.94H269.02H271.10H273.18H275.26H277.34H279.42H281.50H283.58H285.66H287.74H288.59" fill="none" stroke="#1414ff" stroke-width="1.05" stroke-linejoin="round"/></svg><rect x="200.6" y="19.6" width="13.6" height="10.4" fill="#fff" stroke="#ccc" stroke-width="0.8"/><rect x="202.2" y="21.1" width="10.8" height="7.6" fill="#0000ff"/><text x="218.0" y="29.0" font-size="10.67" fill="#8c8c8c">aida05 Rate</text><text x="16.5" y="101.8" font-size="10.67" fill="#545454" text-anchor="end">0</text><text x="16.5" y="84.6" font-size="10.67" fill="#545454" text-anchor="end">10</text><text x="16.5" y="67.4" font-size="10.67" fill="#545454" text-anchor="end">20</text><text x="16.5" y="50.2" font-size="10.67" fill="#545454" text-anchor="end">30</text><text x="16.5" y="33.0" font-size="10.67" fill="#545454" text-anchor="end">40</text><text x="16.5" y="15.8" font-size="10.67" fill="#545454" text-anchor="end">50</text><text x="20.9" y="111.7" font-size="10.67" fill="#545454" text-anchor="middle">0</text><text x="62.6" y="111.7" font-size="10.67" fill="#545454" text-anchor="middle">20</text><text x="104.2" y="111.7" font-size="10.67" fill="#545454" text-anchor="middle">40</text><text x="145.8" y="111.7" font-size="10.67" fill="#545454" text-anchor="middle">60</text><text x="187.3" y="111.7" font-size="10.67" fill="#545454" text-anchor="middle">80</text><text x="228.9" y="111.7" font-size="10.67" fill="#545454" text-anchor="middle">100</text><text x="270.6" y="111.7" font-size="10.67" fill="#545454" text-anchor="middle">120</text><path d="M288.0 2.0l10 10l-10 10l-10 -10z" fill="#ff0000"/></svg>
<svg class="abs" style="left:568px;top:487px;overflow:visible" width="300" height="110" viewBox="0 0 300 110"><path d="M63.35 11.60V97.60" stroke="#e6e6e6" stroke-width="0.8"/><path d="M104.95 11.60V97.60" stroke="#e6e6e6" stroke-width="0.8"/><path d="M146.55 11.60V97.60" stroke="#e6e6e6" stroke-width="0.8"/><path d="M188.15 11.60V97.60" stroke="#e6e6e6" stroke-width="0.8"/><path d="M229.75 11.60V97.60" stroke="#e6e6e6" stroke-width="0.8"/><path d="M271.35 11.60V97.60" stroke="#e6e6e6" stroke-width="0.8"/><path d="M21.00 80.40H290.60" stroke="#e6e6e6" stroke-width="0.8"/><path d="M21.00 63.20H290.60" stroke="#e6e6e6" stroke-width="0.8"/><path d="M21.00 46.00H290.60" stroke="#e6e6e6" stroke-width="0.8"/><path d="M21.00 28.80H290.60" stroke="#e6e6e6" stroke-width="0.8"/><rect x="20.50" y="11.30" width="270.30" height="87.10" fill="none" stroke="#828282" stroke-width="1.6"/><svg x="20.00" y="11.60" width="271.60" height="86.90" viewBox="20.00 11.60 271.60 86.90"><path d="M21.50 97.60H23.58H25.66H27.74H29.82H31.90H33.98H36.06H38.14H40.22H42.30H44.38H46.46H48.54H50.62H52.70H54.78H56.86H58.94H61.02H63.10H65.18H67.26H69.34H71.42H73.50H75.58H77.66H79.74H81.82H83.90H85.98H88.06H90.14H92.22H94.30H96.38H98.46H100.54H102.62H104.70H106.78H108.86H110.94H113.02H115.10H117.18H119.26H121.34H123.42H125.50H127.58H129.66H131.74H133.82H135.90H137.98H140.06H142.14H144.22H146.30H148.38H150.46H152.54H154.62H156.70H158.78H160.86H162.94H165.02H167.10H169.18H171.26H173.34H175.42H177.50H179.58H181.66H183.74H185.82H187.90H189.98H192.06H194.14H196.22H198.30H200.38H202.46H204.54H206.62H208.70H210.78H212.86H214.94H217.02H219.10H221.18H223.26H225.34H227.42H229.50H231.58H233.66H235.74H237.82H239.90H241.98H244.06H246.14H248.22H250.30H252.38H254.46H256.54H258.62H260.70H262.78H264.86H266.94H269.02H271.10H273.18H275.26H277.34H279.42H281.50H283.58H285.66H287.74H288.59" fill="none" stroke="#1414ff" stroke-width="1.05" stroke-linejoin="round"/></svg><rect x="200.9" y="19.6" width="13.6" height="10.4" fill="#fff" stroke="#ccc" stroke-width="0.8"/><rect x="202.5" y="21.1" width="10.8" height="7.6" fill="#0000ff"/><text x="218.3" y="29.0" font-size="10.67" fill="#8c8c8c">aida06 Rate</text><text x="16.8" y="101.8" font-size="10.67" fill="#545454" text-anchor="end">0</text><text x="16.8" y="84.6" font-size="10.67" fill="#545454" text-anchor="end">10</text><text x="16.8" y="67.4" font-size="10.67" fill="#545454" text-anchor="end">20</text><text x="16.8" y="50.2" font-size="10.67" fill="#545454" text-anchor="end">30</text><text x="16.8" y="33.0" font-size="10.67" fill="#545454" text-anchor="end">40</text><text x="16.8" y="15.8" font-size="10.67" fill="#545454" text-anchor="end">50</text><text x="21.2" y="111.7" font-size="10.67" fill="#545454" text-anchor="middle">0</text><text x="62.9" y="111.7" font-size="10.67" fill="#545454" text-anchor="middle">20</text><text x="104.5" y="111.7" font-size="10.67" fill="#545454" text-anchor="middle">40</text><text x="146.1" y="111.7" font-size="10.67" fill="#545454" text-anchor="middle">60</text><text x="187.7" y="111.7" font-size="10.67" fill="#545454" text-anchor="middle">80</text><text x="229.2" y="111.7" font-size="10.67" fill="#545454" text-anchor="middle">100</text><text x="270.9" y="111.7" font-size="10.67" fill="#545454" text-anchor="middle">120</text><path d="M288.0 2.0l10 10l-10 10l-10 -10z" fill="#ff0000"/></svg>
<svg class="abs" style="left:1044px;top:487px;overflow:visible" width="300" height="110" viewBox="0 0 300 110"><path d="M63.35 11.60V97.60" stroke="#e6e6e6" stroke-width="0.8"/><path d="M104.95 11.60V97.60" stroke="#e6e6e6" stroke-width="0.8"/><path d="M146.55 11.60V97.60" stroke="#e6e6e6" stroke-width="0.8"/><path d="M188.15 11.60V97.60" stroke="#e6e6e6" stroke-width="0.8"/><path d="M229.75 11.60V97.60" stroke="#e6e6e6" stroke-width="0.8"/><path d="M271.35 11.60V97.60" stroke="#e6e6e6" stroke-width="0.8"/><path d="M21.00 80.40H290.60" stroke="#e6e6e6" stroke-width="0.8"/><path d="M21.00 63.20H290.60" stroke="#e6e6e6" stroke-width="0.8"/><path d="M21.00 46.00H290.60" stroke="#e6e6e6" stroke-width="0.8"/><path d="M21.00 28.80H290.60" stroke="#e6e6e6" stroke-width="0.8"/><rect x="20.50" y="11.30" width="270.30" height="87.10" fill="none" stroke="#828282" stroke-width="1.6"/><svg x="20.00" y="11.60" width="271.60" height="86.90" viewBox="20.00 11.60 271.60 86.90"><path d="M21.50 97.60H23.58H25.66H27.74H29.82H31.90H33.98H36.06H38.14H40.22H42.30H44.38H46.46H48.54H50.62H52.70H54.78H56.86H58.94H61.02H63.10H65.18H67.26H69.34H71.42H73.50H75.58H77.66H79.74H81.82H83.90H85.98H88.06H90.14H92.22H94.30H96.38H98.46H100.54H102.62H104.70H106.78H108.86H110.94H113.02H115.10H117.18H119.26H121.34H123.42H125.50H127.58H129.66H131.74H133.82H135.90H137.98H140.06H142.14H144.22H146.30H148.38H150.46H152.54H154.62H156.70H158.78H160.86H162.94H165.02H167.10H169.18H171.26H173.34H175.42H177.50H179.58H181.66H183.74H185.82H187.90H189.98H192.06H194.14H196.22H198.30H200.38H202.46H204.54H206.62H208.70H210.78H212.86H214.94H217.02H219.10H221.18H223.26H225.34H227.42H229.50H231.58H233.66H235.74H237.82H239.90H241.98H244.06H246.14H248.22H250.30H252.38H254.46H256.54H258.62H260.70H262.78H264.86H266.94H269.02H271.10H273.18H275.26H277.34H279.42H281.50H283.58H285.66H287.74H288.59" fill="none" stroke="#1414ff" stroke-width="1.05" stroke-linejoin="round"/></svg><rect x="201.2" y="19.6" width="13.6" height="10.4" fill="#fff" stroke="#ccc" stroke-width="0.8"/><rect x="202.8" y="21.1" width="10.8" height="7.6" fill="#0000ff"/><text x="218.6" y="29.0" font-size="10.67" fill="#8c8c8c">aida07 Rate</text><text x="17.1" y="101.8" font-size="10.67" fill="#545454" text-anchor="end">0</text><text x="17.1" y="84.6" font-size="10.67" fill="#545454" text-anchor="end">10</text><text x="17.1" y="67.4" font-size="10.67" fill="#545454" text-anchor="end">20</text><text x="17.1" y="50.2" font-size="10.67" fill="#545454" text-anchor="end">30</text><text x="17.1" y="33.0" font-size="10.67" fill="#545454" text-anchor="end">40</text><text x="17.1" y="15.8" font-size="10.67" fill="#545454" text-anchor="end">50</text><text x="21.6" y="111.7" font-size="10.67" fill="#545454" text-anchor="middle">0</text><text x="63.2" y="111.7" font-size="10.67" fill="#545454" text-anchor="middle">20</text><text x="104.8" y="111.7" font-size="10.67" fill="#545454" text-anchor="middle">40</text><text x="146.3" y="111.7" font-size="10.67" fill="#545454" text-anchor="middle">60</text><text x="187.9" y="111.7" font-size="10.67" fill="#545454" text-anchor="middle">80</text><text x="229.5" y="111.7" font-size="10.67" fill="#545454" text-anchor="middle">100</text><text x="271.2" y="111.7" font-size="10.67" fill="#545454" text-anchor="middle">120</text><path d="M288.0 2.0l10 10l-10 10l-10 -10z" fill="#ff0000"/></svg>
<svg class="abs" style="left:1520px;top:487px;overflow:visible" width="300" height="110" viewBox="0 0 300 110"><path d="M63.35 11.60V97.60" stroke="#e6e6e6" stroke-width="0.8"/><path d="M104.95 11.60V97.60" stroke="#e6e6e6" stroke-width="0.8"/><path d="M146.55 11.60V97.60" stroke="#e6e6e6" stroke-width="0.8"/><path d="M188.15 11.60V97.60" stroke="#e6e6e6" stroke-width="0.8"/><path d="M229.75 11.60V97.60" stroke="#e6e6e6" stroke-width="0.8"/><path d="M271.35 11.60V97.60" stroke="#e6e6e6" stroke-width="0.8"/><path d="M21.00 80.40H290.60" stroke="#e6e6e6" stroke-width="0.8"/><path d="M21.00 63.20H290.60" stroke="#e6e6e6" stroke-width="0.8"/><path d="M21.00 46.00H290.60" stroke="#e6e6e6" stroke-width="0.8"/><path d="M21.00 28.80H290.60" stroke="#e6e6e6" stroke-width="0.8"/><rect x="20.50" y="11.30" width="270.30" height="87.10" fill="none" stroke="#828282" stroke-width="1.6"/><svg x="20.00" y="11.60" width="271.60" height="86.90" viewBox="20.00 11.60 271.60 86.90"><path d="M21.50 97.60H23.58H25.66H27.74H29.82H31.90H33.98H36.06H38.14H40.22H42.30H44.38H46.46H48.54H50.62H52.70H54.78H56.86H58.94H61.02H63.10H65.18H67.26H69.34H71.42H73.50H75.58H77.66H79.74H81.82H83.90H85.98H88.06H90.14H92.22H94.30H96.38H98.46H100.54H102.62H104.70H106.78H108.86H110.94H113.02H115.10H117.18H119.26H121.34H123.42H125.50H127.58H129.66H131.74H133.82H135.90H137.98H140.06H142.14H144.22H146.30H148.38H150.46H152.54H154.62H156.70H158.78H160.86H162.94H165.02H167.10H169.18H171.26H173.34H175.42H177.50H179.58H181.66H183.74H185.82H187.90H189.98H192.06H194.14H196.22H198.30H200.38H202.46H204.54H206.62H208.70H210.78H212.86H214.94H217.02H219.10H221.18H223.26H225.34H227.42H229.50H231.58H233.66H235.74H237.82H239.90H241.98H244.06H246.14H248.22H250.30H252.38H254.46H256.54H258.62H260.70H262.78H264.86H266.94H269.02H271.10H273.18H275.26H277.34H279.42H281.50H283.58H285.66H287.74H288.59" fill="none" stroke="#1414ff" stroke-width="1.05" stroke-linejoin="round"/></svg><rect x="201.6" y="19.6" width="13.6" height="10.4" fill="#fff" stroke="#ccc" stroke-width="0.8"/><rect x="203.2" y="21.1" width="10.8" height="7.6" fill="#0000ff"/><text x="219.0" y="29.0" font-size="10.67" fill="#8c8c8c">aida08 Rate</text><text x="17.5" y="101.8" font-size="10.67" fill="#545454" text-anchor="end">0</text><text x="17.5" y="84.6" font-size="10.67" fill="#545454" text-anchor="end">10</text><text x="17.5" y="67.4" font-size="10.67" fill="#545454" text-anchor="end">20</text><text x="17.5" y="50.2" font-size="10.67" fill="#545454" text-anchor="end">30</text><text x="17.5" y="33.0" font-size="10.67" fill="#545454" text-anchor="end">40</text><text x="17.5" y="15.8" font-size="10.67" fill="#545454" text-anchor="end">50</text><text x="21.9" y="111.7" font-size="10.67" fill="#545454" text-anchor="middle">0</text><text x="63.6" y="111.7" font-size="10.67" fill="#545454" text-anchor="middle">20</text><text x="105.2" y="111.7" font-size="10.67" fill="#545454" text-anchor="middle">40</text><text x="146.8" y="111.7" font-size="10.67" fill="#545454" text-anchor="middle">60</text><text x="188.3" y="111.7" font-size="10.67" fill="#545454" text-anchor="middle">80</text><text x="229.9" y="111.7" font-size="10.67" fill="#545454" text-anchor="middle">100</text><text x="271.6" y="111.7" font-size="10.67" fill="#545454" text-anchor="middle">120</text><path d="M288.0 2.0l10 10l-10 10l-10 -10z" fill="#ff0000"/></svg>
<svg class="abs" style="left:92px;top:609px;overflow:visible" width="300" height="110" viewBox="0 0 300 110"><path d="M63.35 11.60V97.60" stroke="#e6e6e6" stroke-width="0.8"/><path d="M104.95 11.60V97.60" stroke="#e6e6e6" stroke-width="0.8"/><path d="M146.55 11.60V97.60" stroke="#e6e6e6" stroke-width="0.8"/><path d="M188.15 11.60V97.60" stroke="#e6e6e6" stroke-width="0.8"/><path d="M229.75 11.60V97.60" stroke="#e6e6e6" stroke-width="0.8"/><path d="M271.35 11.60V97.60" stroke="#e6e6e6" stroke-width="0.8"/><path d="M21.00 80.40H290.60" stroke="#e6e6e6" stroke-width="0.8"/><path d="M21.00 63.20H290.60" stroke="#e6e6e6" stroke-width="0.8"/><path d="M21.00 46.00H290.60" stroke="#e6e6e6" stroke-width="0.8"/><path d="M21.00 28.80H290.60" stroke="#e6e6e6" stroke-width="0.8"/><rect x="20.50" y="11.30" width="270.30" height="87.10" fill="none" stroke="#828282" stroke-width="1.6"/><svg x="20.00" y="11.60" width="271.60" height="86.90" viewBox="20.00 11.60 271.60 86.90"><path d="M21.50 97.60H23.58H25.66H27.74H29.82H31.90H33.98H36.06H38.14H40.22H42.30H44.38H46.46H48.54H50.62H52.70H54.78H56.86H58.94H61.02H63.10H65.18H67.26H69.34H71.42H73.50H75.58H77.66H79.74H81.82H83.90H85.98H88.06H90.14H92.22H94.30H96.38H98.46H100.54H102.62H104.70H106.78H108.86H110.94H113.02H115.10H117.18H119.26H121.34H123.42H125.50H127.58H129.66H131.74H133.82H135.90H137.98H140.06H142.14H144.22H146.30H148.38H150.46H152.54H154.62H156.70H158.78H160.86H162.94H165.02H167.10H169.18H171.26H173.34H175.42H177.50H179.58H181.66H183.74H185.82H187.90H189.98H192.06H194.14H196.22H198.30H200.38H202.46H204.54H206.62H208.70H210.78H212.86H214.94H217.02H219.10H221.18H223.26H225.34H227.42H229.50H231.58H233.66H235.74H237.82H239.90H241.98H244.06H246.14H248.22V64.92H250.30V94.16H252.38V97.60H254.46H256.54H258.62H260.70H262.78H264.86H266.94H269.02H271.10H273.18H275.26H277.34H279.42H281.50H283.58H285.66H287.74H288.59" fill="none" stroke="#1414ff" stroke-width="1.05" stroke-linejoin="round"/></svg><rect x="200.6" y="19.6" width="13.6" height="10.4" fill="#fff" stroke="#ccc" stroke-width="0.8"/><rect x="202.2" y="21.1" width="10.8" height="7.6" fill="#0000ff"/><text x="218.0" y="29.0" font-size="10.67" fill="#8c8c8c">aida09 Rate</text><text x="16.5" y="101.8" font-size="10.67" fill="#545454" text-anchor="end">0</text><text x="16.5" y="84.6" font-size="10.67" fill="#545454" text-anchor="end">10</text><text x="16.5" y="67.4" font-size="10.67" fill="#545454" text-anchor="end">20</text><text x="16.5" y="50.2" font-size="10.67" fill="#545454" text-anchor="end">30</text><text x="16.5" y="33.0" font-size="10.67" fill="#545454" text-anchor="end">40</text><text x="16.5" y="15.8" font-size="10.67" fill="#545454" text-anchor="end">50</text><text x="20.9" y="111.7" font-size="10.67" fill="#545454" text-anchor="middle">0</text><text x="62.6" y="111.7" font-size="10.67" fill="#545454" text-anchor="middle">20</text><text x="104.2" y="111.7" font-size="10.67" fill="#545454" text-anchor="middle">40</text><text x="145.8" y="111.7" font-size="10.67" fill="#545454" text-anchor="middle">60</text><text x="187.3" y="111.7" font-size="10.67" fill="#545454" text-anchor="middle">80</text><text x="228.9" y="111.7" font-size="10.67" fill="#545454" text-anchor="middle">100</text><text x="270.6" y="111.7" font-size="10.67" fill="#545454" text-anchor="middle">120</text><path d="M288.0 2.0l10 10l-10 10l-10 -10z" fill="#ff0000"/></svg>
<svg class="abs" style="left:568px;top:609px;overflow:visible" width="300" height="110" viewBox="0 0 300 110"><path d="M63.35 11.60V97.60" stroke="#e6e6e6" stroke-width="0.8"/><path d="M104.95 11.60V97.60" stroke="#e6e6e6" stroke-width="0.8"/><path d="M146.55 11.60V97.60" stroke="#e6e6e6" stroke-width="0.8"/><path d="M188.15 11.60V97.60" stroke="#e6e6e6" stroke-width="0.8"/><path d="M229.75 11.60V97.60" stroke="#e6e6e6" stroke-width="0.8"/><path d="M271.35 11.60V97.60" stroke="#e6e6e6" stroke-width="0.8"/><path d="M21.00 80.40H290.60" stroke="#e6e6e6" stroke-width="0.8"/><path d="M21.00 63.20H290.60" stroke="#e6e6e6" stroke-width="0.8"/><path d="M21.00 46.00H290.60" stroke="#e6e6e6" stroke-width="0.8"/><path d="M21.00 28.80H290.60" stroke="#e6e6e6" stroke-width="0.8"/><rect x="20.50" y="11.30" width="270.30" height="87.10" fill="none" stroke="#828282" stroke-width="1.6"/><svg x="20.00" y="11.60" width="271.60" height="86.90" viewBox="20.00 11.60 271.60 86.90"><path d="M21.50 97.60H23.58H25.66H27.74H29.82H31.90H33.98H36.06H38.14H40.22H42.30H44.38H46.46H48.54H50.62H52.70H54.78H56.86H58.94H61.02H63.10H65.18H67.26H69.34H71.42H73.50H75.58H77.66H79.74H81.82H83.90H85.98H88.06H90.14H92.22H94.30H96.38H98.46H100.54H102.62H104.70H106.78H108.86H110.94H113.02H115.10H117.18H119.26H121.34H123.42H125.50H127.58H129.66H131.74H133.82H135.90H137.98H140.06H142.14H144.22H146.30H148.38H150.46H152.54H154.62H156.70H158.78H160.86H162.94H165.02H167.10H169.18H171.26H173.34H175.42H177.50H179.58H181.66H183.74H185.82H187.90H189.98H192.06H194.14H196.22H198.30H200.38H202.46H204.54H206.62H208.70H210.78H212.86H214.94H217.02H219.10H221.18H223.26H225.34H227.42H229.50H231.58H233.66H235.74H237.82H239.90H241.98H244.06H246.14H248.22H250.30H252.38H254.46H256.54H258.62H260.70H262.78H264.86H266.94H269.02H271.10H273.18H275.26H277.34H279.42H281.50H283.58H285.66H287.74H288.59" fill="none" stroke="#1414ff" stroke-width="1.05" stroke-linejoin="round"/></svg><rect x="200.9" y="19.6" width="13.6" height="10.4" fill="#fff" stroke="#ccc" stroke-width="0.8"/><rect x="202.5" y="21.1" width="10.8" height="7.6" fill="#0000ff"/><text x="218.3" y="29.0" font-size="10.67" fill="#8c8c8c">aida10 Rate</text><text x="16.8" y="101.8" font-size="10.67" fill="#545454" text-anchor="end">0</text><text x="16.8" y="84.6" font-size="10.67" fill="#545454" text-anchor="end">10</text><text x="16.8" y="67.4" font-size="10.67" fill="#545454" text-anchor="end">20</text><text x="16.8" y="50.2" font-size="10.67" fill="#545454" text-anchor="end">30</text><text x="16.8" y="33.0" font-size="10.67" fill="#545454" text-anchor="end">40</text><text x="16.8" y="15.8" font-size="10.67" fill="#545454" text-anchor="end">50</text><text x="21.2" y="111.7" font-size="10.67" fill="#545454" text-anchor="middle">0</text><text x="62.9" y="111.7" font-size="10.67" fill="#545454" text-anchor="middle">20</text><text x="104.5" y="111.7" font-size="10.67" fill="#545454" text-anchor="middle">40</text><text x="146.1" y="111.7" font-size="10.67" fill="#545454" text-anchor="middle">60</text><text x="187.7" y="111.7" font-size="10.67" fill="#545454" text-anchor="middle">80</text><text x="229.2" y="111.7" font-size="10.67" fill="#545454" text-anchor="middle">100</text><text x="270.9" y="111.7" font-size="10.67" fill="#545454" text-anchor="middle">120</text><path d="M288.0 2.0l10 10l-10 10l-10 -10z" fill="#ff0000"/></svg>
<svg class="abs" style="left:1044px;top:609px;overflow:visible" width="300" height="110" viewBox="0 0 300 110"><path d="M63.35 11.60V97.60" stroke="#e6e6e6" stroke-width="0.8"/><path d="M104.95 11.60V97.60" stroke="#e6e6e6" stroke-width="0.8"/><path d="M146.55 11.60V97.60" stroke="#e6e6e6" stroke-width="0.8"/><path d="M188.15 11.60V97.60" stroke="#e6e6e6" stroke-width="0.8"/><path d="M229.75 11.60V97.60" stroke="#e6e6e6" stroke-width="0.8"/><path d="M271.35 11.60V97.60" stroke="#e6e6e6" stroke-width="0.8"/><path d="M21.00 80.40H290.60" stroke="#e6e6e6" stroke-width="0.8"/><path d="M21.00 63.20H290.60" stroke="#e6e6e6" stroke-width="0.8"/><path d="M21.00 46.00H290.60" stroke="#e6e6e6" stroke-width="0.8"/><path d="M21.00 28.80H290.60" stroke="#e6e6e6" stroke-width="0.8"/><rect x="20.50" y="11.30" width="270.30" height="87.10" fill="none" stroke="#828282" stroke-width="1.6"/><svg x="20.00" y="11.60" width="271.60" height="86.90" viewBox="20.00 11.60 271.60 86.90"><path d="M21.50 97.60H23.58H25.66H27.74H29.82H31.90H33.98H36.06H38.14H40.22H42.30H44.38H46.46H48.54H50.62H52.70H54.78H56.86H58.94H61.02H63.10H65.18H67.26H69.34H71.42H73.50H75.58H77.66H79.74H81.82H83.90H85.98H88.06H90.14H92.22H94.30H96.38H98.46H100.54H102.62H104.70H106.78H108.86H110.94H113.02H115.10H117.18H119.26H121.34H123.42H125.50H127.58H129.66H131.74H133.82H135.90H137.98H140.06H142.14H144.22H146.30H148.38H150.46H152.54H154.62H156.70H158.78H160.86H162.94H165.02H167.10H169.18H171.26H173.34H175.42H177.50H179.58H181.66H183.74H185.82H187.90H189.98H192.06H194.14H196.22H198.30H200.38H202.46H204.54H206.62H208.70H210.78H212.86H214.94H217.02H219.10H221.18H223.26H225.34H227.42H229.50H231.58H233.66H235.74H237.82H239.90H241.98H244.06H246.14H248.22H250.30H252.38H254.46H256.54H258.62H260.70H262.78H264.86H266.94H269.02H271.10H273.18H275.26H277.34H279.42H281.50H283.58H285.66H287.74H288.59" fill="none" stroke="#1414ff" stroke-width="1.05" stroke-linejoin="round"/></svg><rect x="201.2" y="19.6" width="13.6" height="10.4" fill="#fff" stroke="#ccc" stroke-width="0.8"/><rect x="202.8" y="21.1" width="10.8" height="7.6" fill="#0000ff"/><text x="218.6" y="29.0" font-size="10.67" fill="#8c8c8c">aida11 Rate</text><text x="17.1" y="101.8" font-size="10.67" fill="#545454" text-anchor="end">0</text><text x="17.1" y="84.6" font-size="10.67" fill="#545454" text-anchor="end">10</text><text x="17.1" y="67.4" font-size="10.67" fill="#545454" text-anchor="end">20</text><text x="17.1" y="50.2" font-size="10.67" fill="#545454" text-anchor="end">30</text><text x="17.1" y="33.0" font-size="10.67" fill="#545454" text-anchor="end">40</text><text x="17.1" y="15.8" font-size="10.67" fill="#545454" text-anchor="end">50</text><text x="21.6" y="111.7" font-size="10.67" fill="#545454" text-anchor="middle">0</text><text x="63.2" y="111.7" font-size="10.67" fill="#545454" text-anchor="middle">20</text><text x="104.8" y="111.7" font-size="10.67" fill="#545454" text-anchor="middle">40</text><text x="146.3" y="111.7" font-size="10.67" fill="#545454" text-anchor="middle">60</text><text x="187.9" y="111.7" font-size="10.67" fill="#545454" text-anchor="middle">80</text><text x="229.5" y="111.7" font-size="10.67" fill="#545454" text-anchor="middle">100</text><text x="271.2" y="111.7" font-size="10.67" fill="#545454" text-anchor="middle">120</text><path d="M288.0 2.0l10 10l-10 10l-10 -10z" fill="#ff0000"/></svg>
<svg class="abs" style="left:1520px;top:609px;overflow:visible" width="300" height="110" viewBox="0 0 300 110"><path d="M63.35 11.60V97.60" stroke="#e6e6e6" stroke-width="0.8"/><path d="M104.95 11.60V97.60" stroke="#e6e6e6" stroke-width="0.8"/><path d="M146.55 11.60V97.60" stroke="#e6e6e6" stroke-width="0.8"/><path d="M188.15 11.60V97.60" stroke="#e6e6e6" stroke-width="0.8"/><path d="M229.75 11.60V97.60" stroke="#e6e6e6" stroke-width="0.8"/><path d="M271.35 11.60V97.60" stroke="#e6e6e6" stroke-width="0.8"/><path d="M21.00 80.40H290.60" stroke="#e6e6e6" stroke-width="0.8"/><path d="M21.00 63.20H290.60" stroke="#e6e6e6" stroke-width="0.8"/><path d="M21.00 46.00H290.60" stroke="#e6e6e6" stroke-width="0.8"/><path d="M21.00 28.80H290.60" stroke="#e6e6e6" stroke-width="0.8"/><rect x="20.50" y="11.30" width="270.30" height="87.10" fill="none" stroke="#828282" stroke-width="1.6"/><svg x="20.00" y="11.60" width="271.60" height="86.90" viewBox="20.00 11.60 271.60 86.90"><path d="M21.50 97.60H23.58H25.66H27.74H29.82H31.90H33.98H36.06H38.14H40.22H42.30H44.38H46.46H48.54H50.62H52.70H54.78H56.86H58.94H61.02H63.10H65.18H67.26H69.34H71.42H73.50H75.58H77.66H79.74H81.82H83.90H85.98H88.06H90.14H92.22H94.30H96.38H98.46H100.54H102.62H104.70H106.78H108.86H110.94H113.02H115.10H117.18H119.26H121.34H123.42H125.50H127.58H129.66H131.74H133.82H135.90H137.98H140.06H142.14H144.22H146.30H148.38H150.46H152.54H154.62H156.70H158.78H160.86H162.94H165.02H167.10H169.18H171.26H173.34H175.42H177.50H179.58H181.66H183.74H185.82H187.90H189.98H192.06H194.14H196.22H198.30H200.38H202.46H204.54H206.62H208.70H210.78H212.86H214.94H217.02H219.10H221.18H223.26H225.34H227.42H229.50H231.58H233.66H235.74H237.82H239.90H241.98H244.06H246.14H248.22H250.30H252.38H254.46H256.54H258.62H260.70H262.78H264.86H266.94H269.02H271.10H273.18H275.26H277.34H279.42H281.50H283.58H285.66H287.74H288.59" fill="none" stroke="#1414ff" stroke-width="1.05" stroke-linejoin="round"/></svg><rect x="201.6" y="19.6" width="13.6" height="10.4" fill="#fff" stroke="#ccc" stroke-width="0.8"/><rect x="203.2" y="21.1" width="10.8" height="7.6" fill="#0000ff"/><text x="219.0" y="29.0" font-size="10.67" fill="#8c8c8c">aida12 Rate</text><text x="17.5" y="101.8" font-size="10.67" fill="#545454" text-anchor="end">0</text><text x="17.5" y="84.6" font-size="10.67" fill="#545454" text-anchor="end">10</text><text x="17.5" y="67.4" font-size="10.67" fill="#545454" text-anchor="end">20</text><text x="17.5" y="50.2" font-size="10.67" fill="#545454" text-anchor="end">30</text><text x="17.5" y="33.0" font-size="10.67" fill="#545454" text-anchor="end">40</text><text x="17.5" y="15.8" font-size="10.67" fill="#545454" text-anchor="end">50</text><text x="21.9" y="111.7" font-size="10.67" fill="#545454" text-anchor="middle">0</text><text x="63.6" y="111.7" font-size="10.67" fill="#545454" text-anchor="middle">20</text><text x="105.2" y="111.7" font-size="10.67" fill="#545454" text-anchor="middle">40</text><text x="146.8" y="111.7" font-size="10.67" fill="#545454" text-anchor="middle">60</text><text x="188.3" y="111.7" font-size="10.67" fill="#545454" text-anchor="middle">80</text><text x="229.9" y="111.7" font-size="10.67" fill="#545454" text-anchor="middle">100</text><text x="271.6" y="111.7" font-size="10.67" fill="#545454" text-anchor="middle">120</text><path d="M288.0 2.0l10 10l-10 10l-10 -10z" fill="#ff0000"/></svg>
<svg class="abs" style="left:92px;top:731px;overflow:visible" width="300" height="110" viewBox="0 0 300 110"><path d="M63.35 11.60V97.60" stroke="#e6e6e6" stroke-width="0.8"/><path d="M104.95 11.60V97.60" stroke="#e6e6e6" stroke-width="0.8"/><path d="M146.55 11.60V97.60" stroke="#e6e6e6" stroke-width="0.8"/><path d="M188.15 11.60V97.60" stroke="#e6e6e6" stroke-width="0.8"/><path d="M229.75 11.60V97.60" stroke="#e6e6e6" stroke-width="0.8"/><path d="M271.35 11.60V97.60" stroke="#e6e6e6" stroke-width="0.8"/><path d="M21.00 80.40H290.60" stroke="#e6e6e6" stroke-width="0.8"/><path d="M21.00 63.20H290.60" stroke="#e6e6e6" stroke-width="0.8"/><path d="M21.00 46.00H290.60" stroke="#e6e6e6" stroke-width="0.8"/><path d="M21.00 28.80H290.60" stroke="#e6e6e6" stroke-width="0.8"/><rect x="20.50" y="11.30" width="270.30" height="87.10" fill="none" stroke="#828282" stroke-width="1.6"/><svg x="20.00" y="11.60" width="271.60" height="86.90" viewBox="20.00 11.60 271.60 86.90"><path d="M21.50 97.60H23.58H25.66H27.74H29.82H31.90H33.98H36.06H38.14H40.22H42.30H44.38H46.46H48.54H50.62H52.70H54.78H56.86H58.94H61.02H63.10H65.18H67.26H69.34H71.42H73.50H75.58H77.66H79.74H81.82H83.90H85.98H88.06H90.14H92.22H94.30H96.38H98.46H100.54H102.62H104.70H106.78H108.86H110.94H113.02H115.10H117.18H119.26H121.34H123.42H125.50H127.58H129.66H131.74H133.82H135.90H137.98H140.06H142.14H144.22H146.30H148.38H150.46H152.54H154.62H156.70H158.78H160.86H162.94H165.02H167.10H169.18H171.26H173.34H175.42H177.50H179.58H181.66H183.74H185.82H187.90H189.98H192.06H194.14H196.22H198.30H200.38H202.46H204.54H206.62H208.70H210.78H212.86H214.94H217.02H219.10H221.18H223.26H225.34H227.42H229.50H231.58H233.66H235.74H237.82H239.90H241.98H244.06H246.14H248.22H250.30H252.38H254.46H256.54H258.62H260.70H262.78H264.86H266.94H269.02H271.10H273.18H275.26H277.34H279.42H281.50H283.58H285.66H287.74H288.59" fill="none" stroke="#1414ff" stroke-width="1.05" stroke-linejoin="round"/></svg><rect x="200.6" y="19.6" width="13.6" height="10.4" fill="#fff" stroke="#ccc" stroke-width="0.8"/><rect x="202.2" y="21.1" width="10.8" height="7.6" fill="#0000ff"/><text x="218.0" y="29.0" font-size="10.67" fill="#8c8c8c">aida13 Rate</text><text x="16.5" y="101.8" font-size="10.67" fill="#545454" text-anchor="end">0</text><text x="16.5" y="84.6" font-size="10.67" fill="#545454" text-anchor="end">10</text><text x="16.5" y="67.4" font-size="10.67" fill="#545454" text-anchor="end">20</text><text x="16.5" y="50.2" font-size="10.67" fill="#545454" text-anchor="end">30</text><text x="16.5" y="33.0" font-size="10.67" fill="#545454" text-anchor="end">40</text><text x="16.5" y="15.8" font-size="10.67" fill="#545454" text-anchor="end">50</text><text x="20.9" y="111.7" font-size="10.67" fill="#545454" text-anchor="middle">0</text><text x="62.6" y="111.7" font-size="10.67" fill="#545454" text-anchor="middle">20</text><text x="104.2" y="111.7" font-size="10.67" fill="#545454" text-anchor="middle">40</text><text x="145.8" y="111.7" font-size="10.67" fill="#545454" text-anchor="middle">60</text><text x="187.3" y="111.7" font-size="10.67" fill="#545454" text-anchor="middle">80</text><text x="228.9" y="111.7" font-size="10.67" fill="#545454" text-anchor="middle">100</text><text x="270.6" y="111.7" font-size="10.67" fill="#545454" text-anchor="middle">120</text><path d="M288.0 2.0l10 10l-10 10l-10 -10z" fill="#ff0000"/></svg>
<svg class="abs" style="left:568px;top:731px;overflow:visible" width="300" height="110" viewBox="0 0 300 110"><path d="M63.35 11.60V97.60" stroke="#e6e6e6" stroke-width="0.8"/><path d="M104.95 11.60V97.60" stroke="#e6e6e6" stroke-width="0.8"/><path d="M146.55 11.60V97.60" stroke="#e6e6e6" stroke-width="0.8"/><path d="M188.15 11.60V97.60" stroke="#e6e6e6" stroke-width="0.8"/><path d="M229.75 11.60V97.60" stroke="#e6e6e6" stroke-width="0.8"/><path d="M271.35 11.60V97.60" stroke="#e6e6e6" stroke-width="0.8"/><path d="M21.00 80.40H290.60" stroke="#e6e6e6" stroke-width="0.8"/><path d="M21.00 63.20H290.60" stroke="#e6e6e6" stroke-width="0.8"/><path d="M21.00 46.00H290.60" stroke="#e6e6e6" stroke-width="0.8"/><path d="M21.00 28.80H290.60" stroke="#e6e6e6" stroke-width="0.8"/><rect x="20.50" y="11.30" width="270.30" height="87.10" fill="none" stroke="#828282" stroke-width="1.6"/><svg x="20.00" y="11.60" width="271.60" height="86.90" viewBox="20.00 11.60 271.60 86.90"><path d="M21.50 97.60H23.58H25.66H27.74H29.82H31.90H33.98H36.06H38.14H40.22H42.30H44.38H46.46H48.54H50.62H52.70H54.78H56.86H58.94H61.02H63.10H65.18H67.26H69.34H71.42H73.50H75.58H77.66H79.74H81.82H83.90H85.98H88.06H90.14H92.22H94.30H96.38H98.46H100.54H102.62H104.70H106.78H108.86H110.94H113.02H115.10H117.18H119.26H121.34H123.42H125.50H127.58H129.66H131.74H133.82H135.90H137.98H140.06H142.14H144.22H146.30H148.38H150.46H152.54H154.62H156.70H158.78H160.86H162.94H165.02H167.10H169.18H171.26H173.34H175.42H177.50H179.58H181.66H183.74H185.82H187.90H189.98H192.06H194.14H196.22H198.30H200.38H202.46H204.54H206.62H208.70H210.78H212.86H214.94H217.02H219.10H221.18H223.26H225.34H227.42H229.50H231.58H233.66H235.74H237.82H239.90H241.98H244.06H246.14H248.22H250.30H252.38H254.46H256.54H258.62H260.70H262.78H264.86H266.94H269.02H271.10H273.18H275.26H277.34H279.42H281.50H283.58H285.66H287.74H288.59" fill="none" stroke="#1414ff" stroke-width="1.05" stroke-linejoin="round"/></svg><rect x="200.9" y="19.6" width="13.6" height="10.4" fill="#fff" stroke="#ccc" stroke-width="0.8"/><rect x="202.5" y="21.1" width="10.8" height="7.6" fill="#0000ff"/><text x="218.3" y="29.0" font-size="10.67" fill="#8c8c8c">aida14 Rate</text><text x="16.8" y="101.8" font-size="10.67" fill="#545454" text-anchor="end">0</text><text x="16.8" y="84.6" font-size="10.67" fill="#545454" text-anchor="end">10</text><text x="16.8" y="67.4" font-size="10.67" fill="#545454" text-anchor="end">20</text><text x="16.8" y="50.2" font-size="10.67" fill="#545454" text-anchor="end">30</text><text x="16.8" y="33.0" font-size="10.67" fill="#545454" text-anchor="end">40</text><text x="16.8" y="15.8" font-size="10.67" fill="#545454" text-anchor="end">50</text><text x="21.2" y="111.7" font-size="10.67" fill="#545454" text-anchor="middle">0</text><text x="62.9" y="111.7" font-size="10.67" fill="#545454" text-anchor="middle">20</text><text x="104.5" y="111.7" font-size="10.67" fill="#545454" text-anchor="middle">40</text><text x="146.1" y="111.7" font-size="10.67" fill="#545454" text-anchor="middle">60</text><text x="187.7" y="111.7" font-size="10.67" fill="#545454" text-anchor="middle">80</text><text x="229.2" y="111.7" font-size="10.67" fill="#545454" text-anchor="middle">100</text><text x="270.9" y="111.7" font-size="10.67" fill="#545454" text-anchor="middle">120</text><path d="M288.0 2.0l10 10l-10 10l-10 -10z" fill="#ff0000"/></svg>
<svg class="abs" style="left:1044px;top:731px;overflow:visible" width="300" height="110" viewBox="0 0 300 110"><path d="M63.35 11.60V97.60" stroke="#e6e6e6" stroke-width="0.8"/><path d="M104.95 11.60V97.60" stroke="#e6e6e6" stroke-width="0.8"/><path d="M146.55 11.60V97.60" stroke="#e6e6e6" stroke-width="0.8"/><path d="M188.15 11.60V97.60" stroke="#e6e6e6" stroke-width="0.8"/><path d="M229.75 11.60V97.60" stroke="#e6e6e6" stroke-width="0.8"/><path d="M271.35 11.60V97.60" stroke="#e6e6e6" stroke-width="0.8"/><path d="M21.00 80.40H290.60" stroke="#e6e6e6" stroke-width="0.8"/><path d="M21.00 63.20H290.60" stroke="#e6e6e6" stroke-width="0.8"/><path d="M21.00 46.00H290.60" stroke="#e6e6e6" stroke-width="0.8"/><path d="M21.00 28.80H290.60" stroke="#e6e6e6" stroke-width="0.8"/><rect x="20.50" y="11.30" width="270.30" height="87.10" fill="none" stroke="#828282" stroke-width="1.6"/><svg x="20.00" y="11.60" width="271.60" height="86.90" viewBox="20.00 11.60 271.60 86.90"><path d="M21.50 97.60H23.58H25.66H27.74H29.82H31.90H33.98H36.06H38.14H40.22H42.30H44.38H46.46H48.54H50.62H52.70H54.78H56.86H58.94H61.02H63.10H65.18H67.26H69.34H71.42H73.50H75.58H77.66H79.74H81.82H83.90H85.98H88.06H90.14H92.22H94.30H96.38H98.46H100.54H102.62H104.70H106.78H108.86H110.94H113.02H115.10H117.18H119.26H121.34H123.42H125.50H127.58H129.66H131.74H133.82H135.90H137.98H140.06H142.14H144.22H146.30H148.38H150.46H152.54H154.62H156.70H158.78H160.86H162.94H165.02H167.10H169.18H171.26H173.34H175.42H177.50H179.58H181.66H183.74H185.82H187.90H189.98H192.06H194.14H196.22H198.30H200.38H202.46H204.54H206.62H208.70H210.78H212.86H214.94H217.02H219.10H221.18H223.26V94.16H225.34V97.60H227.42H229.50H231.58V6.00H233.66V97.60H235.74H237.82H239.90H241.98H244.06H246.14V6.00H248.22V97.60H250.30H252.38H254.46H256.54H258.62H260.70H262.78H264.86H266.94H269.02H271.10H273.18H275.26H277.34H279.42H281.50H283.58H285.66H287.74H288.59" fill="none" stroke="#1414ff" stroke-width="1.05" stroke-linejoin="round"/></svg><rect x="201.2" y="19.6" width="13.6" height="10.4" fill="#fff" stroke="#ccc" stroke-width="0.8"/><rect x="202.8" y="21.1" width="10.8" height="7.6" fill="#0000ff"/><text x="218.6" y="29.0" font-size="10.67" fill="#8c8c8c">aida15 Rate</text><text x="17.1" y="101.8" font-size="10.67" fill="#545454" text-anchor="end">0</text><text x="17.1" y="84.6" font-size="10.67" fill="#545454" text-anchor="end">10</text><text x="17.1" y="67.4" font-size="10.67" fill="#545454" text-anchor="end">20</text><text x="17.1" y="50.2" font-size="10.67" fill="#545454" text-anchor="end">30</text><text x="17.1" y="33.0" font-size="10.67" fill="#545454" text-anchor="end">40</text><text x="17.1" y="15.8" font-size="10.67" fill="#545454" text-anchor="end">50</text><text x="21.6" y="111.7" font-size="10.67" fill="#545454" text-anchor="middle">0</text><text x="63.2" y="111.7" font-size="10.67" fill="#545454" text-anchor="middle">20</text><text x="104.8" y="111.7" font-size="10.67" fill="#545454" text-anchor="middle">40</text><text x="146.3" y="111.7" font-size="10.67" fill="#545454" text-anchor="middle">60</text><text x="187.9" y="111.7" font-size="10.67" fill="#545454" text-anchor="middle">80</text><text x="229.5" y="111.7" font-size="10.67" fill="#545454" text-anchor="middle">100</text><text x="271.2" y="111.7" font-size="10.67" fill="#545454" text-anchor="middle">120</text><path d="M288.0 2.0l10 10l-10 10l-10 -10z" fill="#ff0000"/></svg>
<svg class="abs" style="left:1520px;top:731px;overflow:visible" width="300" height="110" viewBox="0 0 300 110"><path d="M63.35 11.60V97.60" stroke="#c4c4c4" stroke-width="0.8"/><path d="M104.95 11.60V97.60" stroke="#c4c4c4" stroke-width="0.8"/><path d="M146.55 11.60V97.60" stroke="#c4c4c4" stroke-width="0.8"/><path d="M188.15 11.60V97.60" stroke="#c4c4c4" stroke-width="0.8"/><path d="M229.75 11.60V97.60" stroke="#c4c4c4" stroke-width="0.8"/><path d="M271.35 11.60V97.60" stroke="#c4c4c4" stroke-width="0.8"/><path d="M21.00 80.40H290.60" stroke="#c4c4c4" stroke-width="0.8"/><path d="M21.00 63.20H290.60" stroke="#c4c4c4" stroke-width="0.8"/><path d="M21.00 46.00H290.60" stroke="#c4c4c4" stroke-width="0.8"/><path d="M21.00 28.80H290.60" stroke="#c4c4c4" stroke-width="0.8"/><rect x="20.50" y="11.30" width="270.30" height="87.10" fill="none" stroke="#000" stroke-width="1.6"/><svg x="20.00" y="11.60" width="271.60" height="86.90" viewBox="20.00 11.60 271.60 86.90"><path d="M21.50 97.60H23.58H25.66H27.74H29.82H31.90H33.98H36.06H38.14H40.22H42.30H44.38H46.46H48.54H50.62H52.70H54.78H56.86H58.94H61.02H63.10H65.18H67.26H69.34H71.42H73.50H75.58H77.66H79.74H81.82H83.90H85.98H88.06H90.14H92.22H94.30H96.38H98.46H100.54H102.62H104.70H106.78H108.86H110.94H113.02H115.10H117.18H119.26H121.34H123.42H125.50H127.58H129.66H131.74H133.82H135.90H137.98H140.06H142.14H144.22H146.30H148.38H150.46H152.54H154.62H156.70H158.78H160.86H162.94H165.02H167.10H169.18H171.26H173.34H175.42H177.50H179.58H181.66H183.74H185.82H187.90H189.98H192.06H194.14H196.22H198.30H200.38H202.46H204.54H206.62H208.70H210.78H212.86H214.94H217.02H219.10H221.18H223.26H225.34H227.42H229.50H231.58H233.66H235.74H237.82H239.90H241.98H244.06H246.14H248.22H250.30H252.38H254.46H256.54H258.62H260.70H262.78H264.86H266.94H269.02H271.10H273.18H275.26H277.34H279.42H281.50H283.58H285.66H287.74H288.59" fill="none" stroke="#1414ff" stroke-width="1.05" stroke-linejoin="round"/></svg><rect x="201.6" y="19.6" width="13.6" height="10.4" fill="#fff" stroke="#ccc" stroke-width="0.8"/><rect x="203.2" y="21.1" width="10.8" height="7.6" fill="#0000ff"/><text x="219.0" y="29.0" font-size="10.67" fill="#000">aida16 Rate</text><text x="17.5" y="101.8" font-size="10.67" fill="#545454" text-anchor="end">0</text><text x="17.5" y="84.6" font-size="10.67" fill="#545454" text-anchor="end">10</text><text x="17.5" y="67.4" font-size="10.67" fill="#545454" text-anchor="end">20</text><text x="17.5" y="50.2" font-size="10.67" fill="#545454" text-anchor="end">30</text><text x="17.5" y="33.0" font-size="10.67" fill="#545454" text-anchor="end">40</text><text x="17.5" y="15.8" font-size="10.67" fill="#545454" text-anchor="end">50</text><text x="21.9" y="111.7" font-size="10.67" fill="#545454" text-anchor="middle">0</text><text x="63.6" y="111.7" font-size="10.67" fill="#545454" text-anchor="middle">20</text><text x="105.2" y="111.7" font-size="10.67" fill="#545454" text-anchor="middle">40</text><text x="146.8" y="111.7" font-size="10.67" fill="#545454" text-anchor="middle">60</text><text x="188.3" y="111.7" font-size="10.67" fill="#545454" text-anchor="middle">80</text><text x="229.9" y="111.7" font-size="10.67" fill="#545454" text-anchor="middle">100</text><text x="271.6" y="111.7" font-size="10.67" fill="#545454" text-anchor="middle">120</text><path d="M288.0 2.0l10 10l-10 10l-10 -10z" fill="#00ff00"/></svg>
<div class="abs ui btn" style="left:6px;top:862px;width:100px;height:19px"><span style="letter-spacing:-0.056px">Empty Log Window</span></div>
<div class="abs ui btn" style="left:110px;top:862px;width:132px;height:19px"><span style="letter-spacing:-0.043px">Send Log Window to ELog</span></div>
<div class="abs ui btn" style="left:246px;top:862px;width:40px;height:19px"><span style="letter-spacing:-0.213px">Reload</span></div>
<div class="abs ui btn" style="left:290px;top:862px;width:35px;height:19px"><span style="letter-spacing:-0.287px">Reset</span></div>
<div class="abs ui btn" style="left:329px;top:862px;width:80px;height:19px"><span style="letter-spacing:-0.168px">Show Variables</span></div>
<div class="abs ui btn" style="left:413px;top:862px;width:96px;height:19px"><span style="letter-spacing:0.010px">Show Log Window</span></div>
<div class="abs ui btn" style="left:513px;top:862px;width:79px;height:19px"><span style="letter-spacing:-0.245px">Enable Logging</span></div>
<div class="abs ui btn" style="left:1806px;top:862px;width:108px;height:19px"><span style="letter-spacing:-0.122px">How to use this page</span></div>
<div class="abs t" style="left:1636px;top:894px">Last Updated: February 12, 2024 23:14:45</div>
<div class="abs hr" style="top:922px"></div>
<div class="abs" style="left:7.4px;top:922.7px;font-size:13.5px;line-height:12px;color:#2a2a2a">.</div>
<div class="abs t" style="left:8px;top:936px;color:#0000ee;text-decoration:underline">Home</div>
</div></body></html>
